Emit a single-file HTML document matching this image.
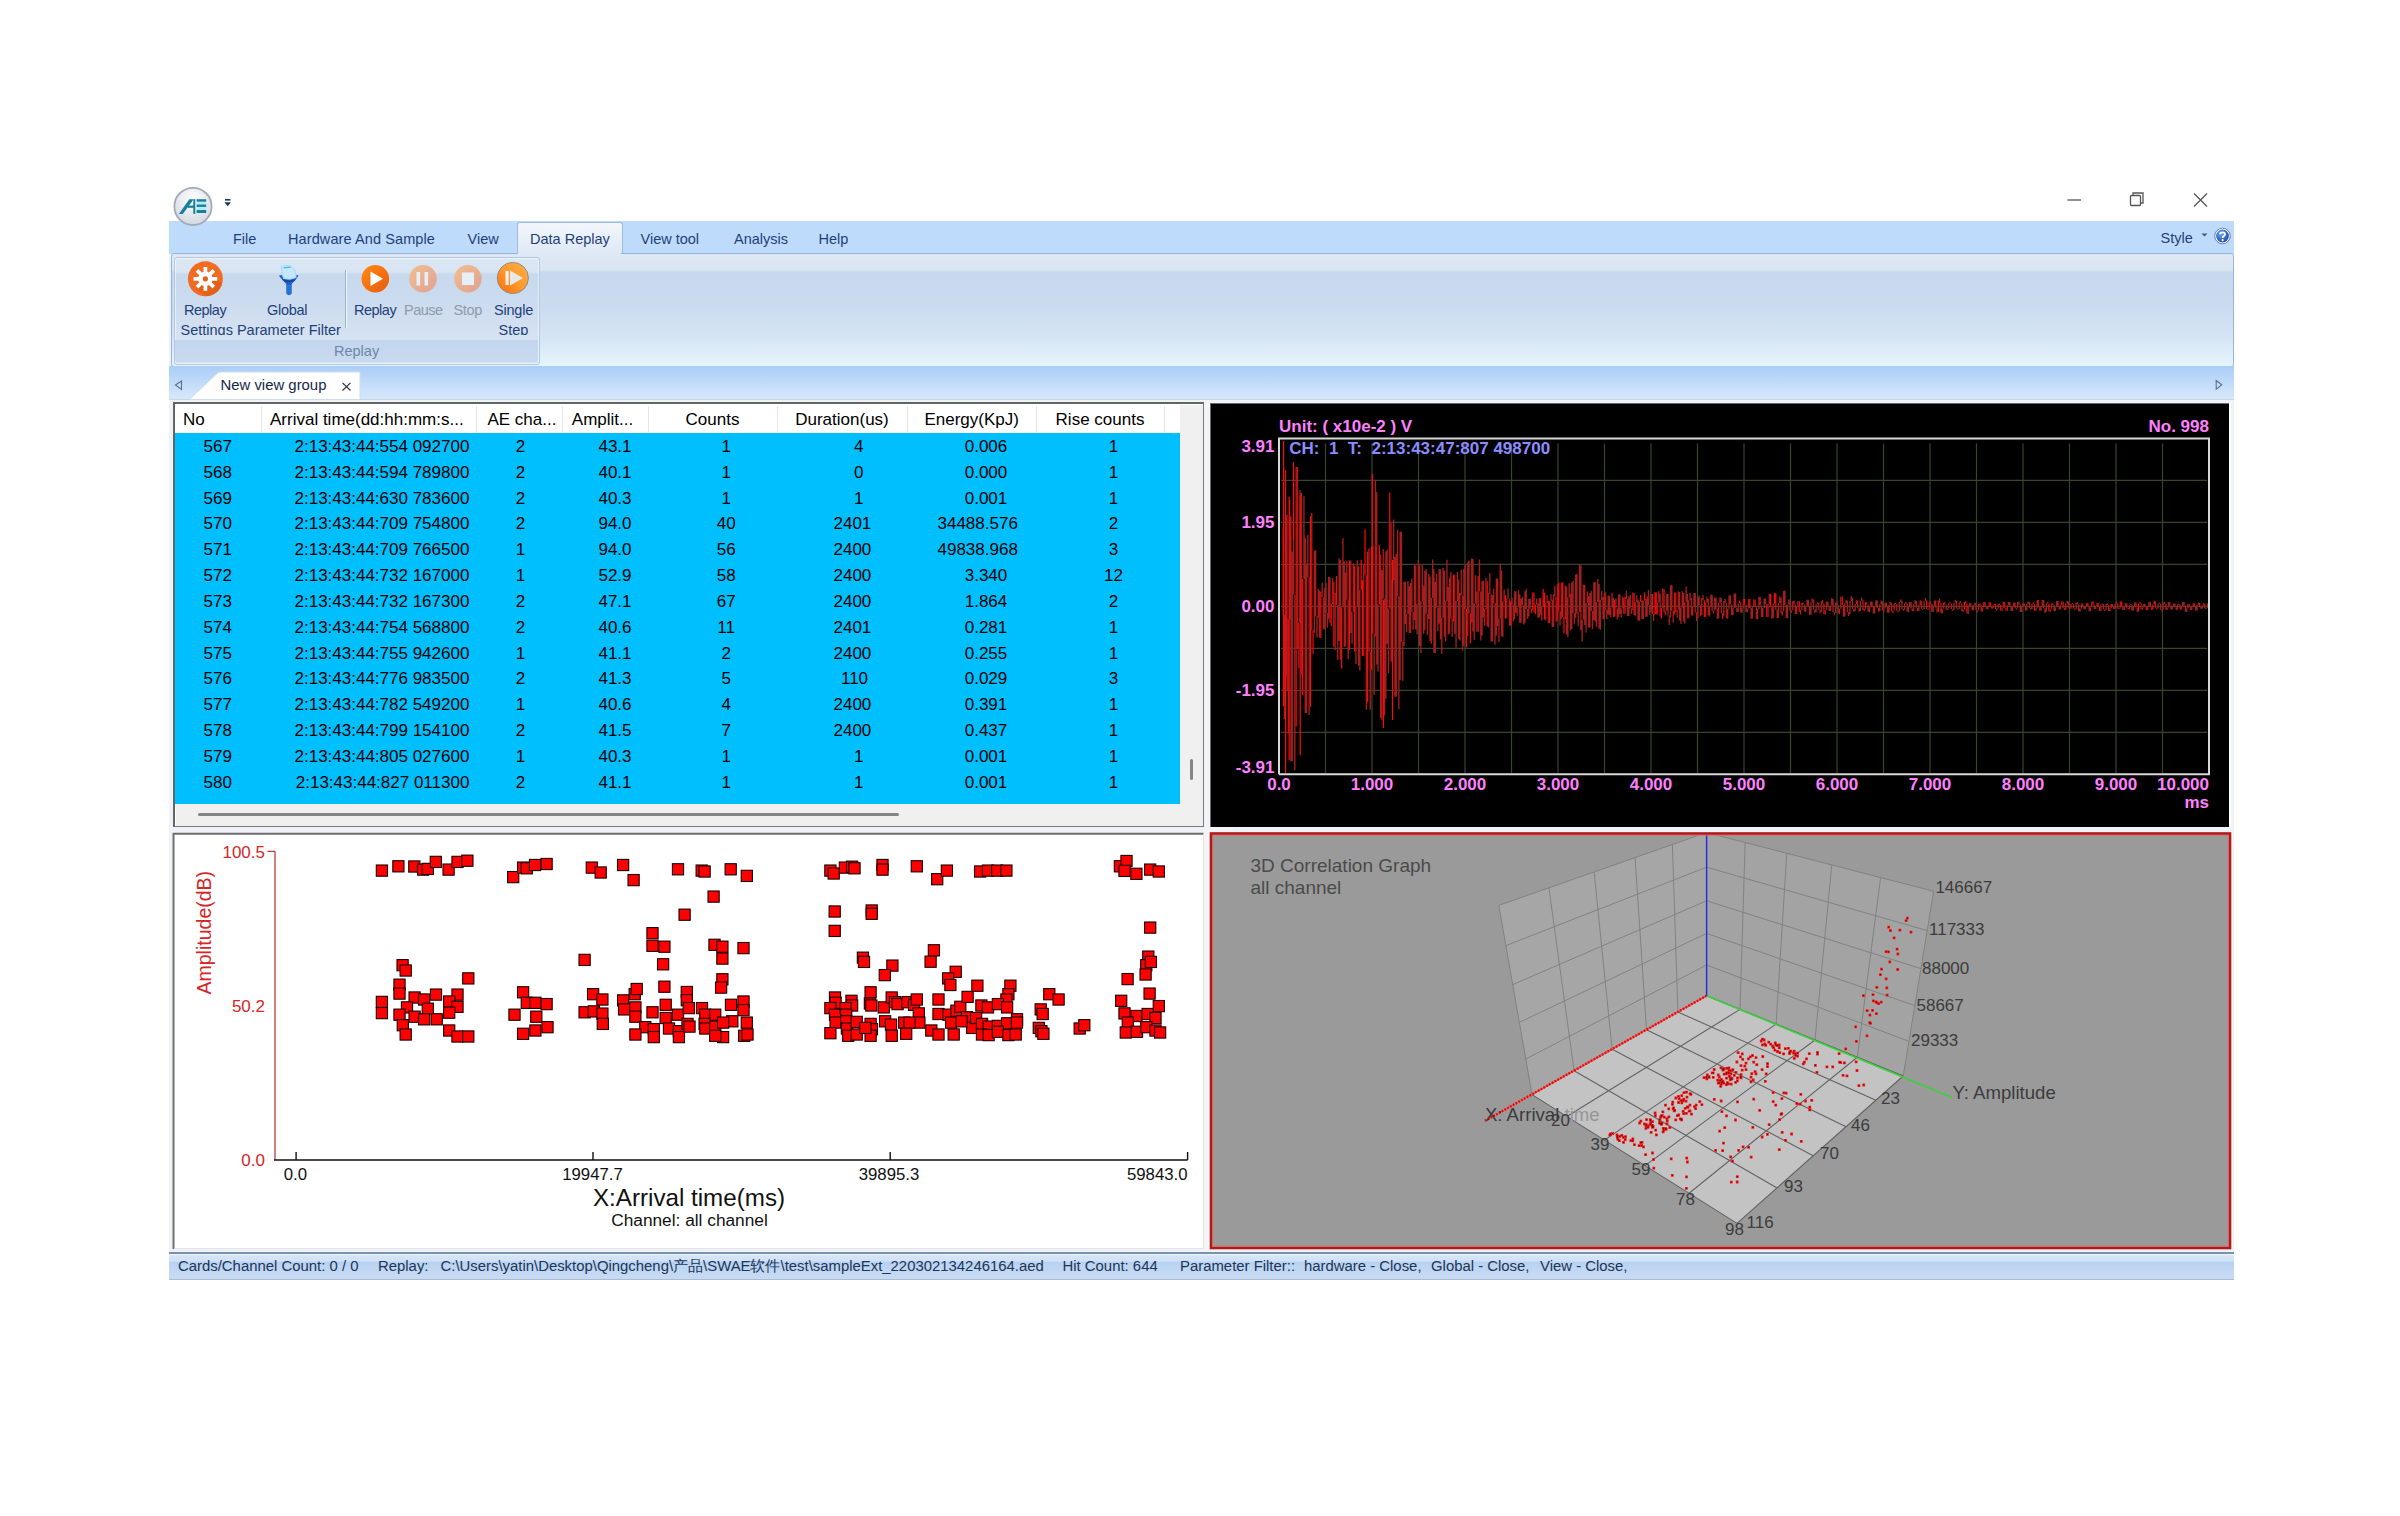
<!DOCTYPE html>
<html><head><meta charset="utf-8"><style>
html,body{margin:0;padding:0;background:#fff;}
body{width:2400px;height:1516px;position:relative;overflow:hidden;font-family:"Liberation Sans", sans-serif;}
.a{position:absolute;}
svg text{font-family:"Liberation Sans", sans-serif;}
</style></head><body>

<!-- window content background -->
<div class="a" style="left:169px;top:221px;width:2065px;height:1059px;background:#eef3f9;"></div>
<!-- menu bar -->
<div class="a" style="left:169px;top:221px;width:2065px;height:33px;background:#bfdbfb;"></div>
<!-- logo -->
<svg class="a" style="left:168px;top:182px" width="50" height="50" viewBox="0 0 50 50">
 <defs><radialGradient id="lg" cx="50%" cy="30%" r="70%"><stop offset="0" stop-color="#ffffff"/><stop offset="0.55" stop-color="#e6e9ef"/><stop offset="1" stop-color="#d3d9e2"/></radialGradient></defs>
 <circle cx="25" cy="24.4" r="18.6" fill="url(#lg)" stroke="#a3abb8" stroke-width="1.8"/>
 <path d="M10.9 31.9 L14.8 31.9 L25.7 17.2 L21.3 17.2 Z" fill="#16809a"/>
 <rect x="25.3" y="17.2" width="2" height="14.7" fill="#16809a"/>
 <rect x="20" y="23.6" width="6" height="2.2" fill="#16809a"/>
 <rect x="28.6" y="17.2" width="9.6" height="2.6" fill="#16809a"/>
 <rect x="28.6" y="19.8" width="9.6" height="2.6" fill="#aeeef8"/>
 <rect x="28.6" y="22.5" width="9.6" height="2.4" fill="#16809a"/>
 <rect x="28.6" y="25.0" width="9.6" height="2.8" fill="#aeeef8"/>
 <rect x="28.6" y="28.0" width="9.6" height="3.0" fill="#16809a"/>
</svg>
<!-- quick access arrow -->
<svg class="a" style="left:223px;top:198px" width="12" height="12" viewBox="0 0 12 12">
 <rect x="2" y="1" width="5.5" height="1.6" fill="#1a3560"/>
 <path d="M1.5 4.2 L8 4.2 L4.75 8.2 Z" fill="#1a3560"/>
</svg>
<!-- window controls -->
<svg class="a" style="left:2060px;top:185px" width="160" height="30" viewBox="0 0 160 30">
 <line x1="7.5" y1="15" x2="21" y2="15" stroke="#555" stroke-width="1.3"/>
 <rect x="70.5" y="10.5" width="10" height="10" fill="none" stroke="#555" stroke-width="1.3" rx="1"/>
 <path d="M73 10.5 V8 H83 V18 H80.5" fill="none" stroke="#555" stroke-width="1.3"/>
 <path d="M134 8.5 L147 21.5 M147 8.5 L134 21.5" stroke="#555" stroke-width="1.3"/>
</svg>
<!-- Data Replay active tab -->
<div class="a" style="left:517px;top:222px;width:104px;height:32px;background:linear-gradient(#f3f7fc,#dde8f5);border:1px solid #9fbce0;border-bottom:none;border-radius:3px 3px 0 0;"></div>
<!-- menu text -->
<div class="a" style="left:0;top:229px;font-size:14.5px;color:#1e3f7a;line-height:20px;white-space:nowrap;">
 <span class="a" style="left:233px">File</span>
 <span class="a" style="left:288px;letter-spacing:0.1px">Hardware And Sample</span>
 <span class="a" style="left:467.5px">View</span>
 <span class="a" style="left:530px">Data Replay</span>
 <span class="a" style="left:640.5px">View tool</span>
 <span class="a" style="left:734px">Analysis</span>
 <span class="a" style="left:818.5px">Help</span>
 <span class="a" style="left:2160.5px;top:-1px">Style</span>
</div>
<svg class="a" style="left:2198px;top:226px" width="34" height="20" viewBox="0 0 34 20">
 <path d="M3.5 7.5 L9.5 7.5 L6.5 10.5 Z" fill="#3a5a8a"/>
 <defs><radialGradient id="hg" cx="40%" cy="35%" r="65%"><stop offset="0" stop-color="#6fa6f0"/><stop offset="1" stop-color="#1848b0"/></radialGradient></defs>
 <circle cx="24.5" cy="10" r="7" fill="url(#hg)" stroke="#fff" stroke-width="1.2"/>
 <circle cx="24.5" cy="10" r="7.8" fill="none" stroke="#4a6fb0" stroke-width="0.8"/>
 <path d="M22 8.2 C22 5.8 27 5.8 27 8.2 C27 10 24.6 10 24.6 12" fill="none" stroke="#fff" stroke-width="1.8"/>
 <circle cx="24.6" cy="14.2" r="1.1" fill="#fff"/>
</svg>
<!-- ribbon panel -->
<div class="a" style="left:171px;top:253px;width:2061px;height:112px;border:1px solid #95b4dc;border-radius:3px;background:linear-gradient(#dfe8f5 0px,#dbe6f3 16px,#c7d9ef 18px,#cadbef 50px,#d3e3f3 80px,#e6f4fc 112px);"></div>
<div class="a" style="left:518px;top:252px;width:103px;height:3px;background:#dfe8f5;"></div>
<!-- group box -->
<div class="a" style="left:173.5px;top:256.5px;width:364px;height:106px;border:1px solid #b2c8e4;border-radius:3px;background:linear-gradient(#dce7f4 0px,#d9e5f3 14px,#c8d9ee 16px,#cddcef 50px,#d6e3f2 83px);box-shadow:inset 0 0 0 1px rgba(255,255,255,0.5);"></div>
<div class="a" style="left:175px;top:340px;width:363px;height:22px;background:linear-gradient(#c3d6ee,#c8daf0);border-radius:0 0 3px 3px;"></div>
<div class="a" style="left:173.5px;top:356px;width:366px;text-align:center;"></div>
<!-- separator -->
<div class="a" style="left:345px;top:270px;width:1px;height:58px;background:#9bb3d3;"></div>
<div class="a" style="left:346px;top:270px;width:1px;height:58px;background:#f0f6fc;"></div>
<!-- ribbon icons -->
<svg class="a" style="left:170px;top:250px" width="380" height="60" viewBox="170 250 380 60">
 <defs>
  <linearGradient id="og" x1="0" y1="0" x2="1" y2="1"><stop offset="0" stop-color="#ff8a14"/><stop offset="1" stop-color="#e85a10"/></linearGradient>
  <linearGradient id="fg" x1="0" y1="0" x2="1" y2="1"><stop offset="0" stop-color="#f0c090"/><stop offset="1" stop-color="#e0a090"/></linearGradient>
  <linearGradient id="sg" x1="0" y1="1" x2="1" y2="0"><stop offset="0" stop-color="#ff6a00"/><stop offset="0.5" stop-color="#ff9a30"/><stop offset="1" stop-color="#ffb040"/></linearGradient>
 </defs>
 <circle cx="205.4" cy="278.8" r="17.5" fill="#f26b22"/>
 <clipPath id="gc"><circle cx="205.4" cy="278.8" r="17.5"/></clipPath><path clip-path="url(#gc)" d="M210 272 L230 292 L215 305 L196 288 Z" fill="#d95a1a" opacity="0.55"/>
 <path d="M202.64 272.15 L203.54 271.85 L203.52 266.95 L207.28 266.95 L207.26 271.85 L208.16 272.15 L209.00 272.56 L212.45 269.09 L215.11 271.75 L211.64 275.20 L212.05 276.04 L212.35 276.94 L217.25 276.92 L217.25 280.68 L212.35 280.66 L212.05 281.56 L211.64 282.40 L215.11 285.85 L212.45 288.51 L209.00 285.04 L208.16 285.45 L207.26 285.75 L207.28 290.65 L203.52 290.65 L203.54 285.75 L202.64 285.45 L201.80 285.04 L198.35 288.51 L195.69 285.85 L199.16 282.40 L198.75 281.56 L198.45 280.66 L193.55 280.68 L193.55 276.92 L198.45 276.94 L198.75 276.04 L199.16 275.20 L195.69 271.75 L198.35 269.09 L201.80 272.56 Z" fill="#fff"/><circle cx="205.4" cy="278.8" r="2.6" fill="#e2601c"/>
 <!-- funnel -->
 <path d="M279 275.5 C281 279.5 285 281 286.5 285 L286.5 293.8 Q289 296.5 291.5 293.8 L291.5 285 C293 281 297 279.5 298.5 275.5 L296.3 275 C294.5 279 283.5 279 281.5 275 Z" fill="#1e62c6"/>
 <path d="M281.2 266.5 Q286 264.5 291 266 L295 270 L296.2 277.5 Q290 280.5 283.5 278.5 L282 272 Z" fill="#c6e6fb" stroke="#a6d6f4" stroke-width="0.9"/>
 <path d="M283.5 267.8 L290.5 267.2" stroke="#4fb4e8" stroke-width="1.3"/>
 <path d="M282 279.3 Q289 281.5 296 279.3 L294 281.5 Q289 283 284 281.5 Z" fill="#1846a8"/>
 <path d="M286.5 285 L291.5 285 L291.5 293.5 Q289 295.5 286.5 293.5 Z" fill="#2473d8"/>
 <circle cx="375.3" cy="278.8" r="13.8" fill="url(#og)"/>
 <path d="M370.5 271.5 L383 278.8 L370.5 286 Z" fill="#fff"/>
 <circle cx="423" cy="278.8" r="13.8" fill="url(#fg)"/>
 <rect x="416.5" y="272" width="3.6" height="13.5" fill="#e6eef8"/><rect x="424.5" y="272" width="3.6" height="13.5" fill="#e6eef8"/>
 <circle cx="467.9" cy="278.8" r="13.8" fill="url(#fg)"/>
 <rect x="462" y="272.5" width="12" height="12.5" fill="#e6eef8"/>
 <circle cx="512.8" cy="278" r="15.6" fill="url(#sg)" stroke="#8a8f98" stroke-width="1"/>
 <rect x="505.5" y="271" width="3.2" height="14" fill="#f0f0f0"/>
 <path d="M510 270.5 L523 278 L510 285.5 Z" fill="#e8e8e8"/>
</svg>
<!-- ribbon labels -->
<div class="a" style="left:0;top:301px;font-size:14.5px;color:#1e3f7a;line-height:18px;white-space:nowrap;">
 <span class="a" style="left:184px;letter-spacing:-0.5px">Replay</span>
 <span class="a" style="left:267px;letter-spacing:-0.3px">Global</span>
 <span class="a" style="left:354px;letter-spacing:-0.5px">Replay</span>
 <span class="a" style="left:404px;color:#8d9bab;letter-spacing:-0.5px">Pause</span>
 <span class="a" style="left:453.5px;color:#8d9bab;letter-spacing:-0.3px">Stop</span>
 <span class="a" style="left:494px;letter-spacing:-0.2px">Single</span>
</div>
<div class="a" style="left:170px;top:320px;width:380px;height:14.5px;overflow:hidden;font-size:14.5px;color:#1e3f7a;line-height:18px;white-space:nowrap;">
 <span class="a" style="left:10.5px;top:1px">Settings Parameter Filter</span>
 <span class="a" style="left:328.5px;top:1px">Step</span>
</div>
<div class="a" style="left:334px;top:342px;font-size:14.5px;color:#6e87a8;line-height:18px;white-space:nowrap;">Replay</div>
<!-- tab strip -->
<div class="a" style="left:169px;top:366px;width:2065px;height:34px;background:linear-gradient(#aacdf8,#c6def9 60%,#d9e8fb);"></div>
<div class="a" style="left:169px;top:399px;width:2065px;height:1px;background:#c8d6e6;"></div>
<svg class="a" style="left:169px;top:366px" width="2065" height="34" viewBox="169 366 2065 34">
 <path d="M189.5 399.5 L216 374.5 Q217.5 372 221 372 L360 372 L360 399.5 Z" fill="#fff" stroke="#cfdcea" stroke-width="1"/>
 <path d="M175.5 385 L181.5 381 L181.5 389.5 Z" fill="none" stroke="#5a7090" stroke-width="1.1"/>
 <path d="M2216.2 380.5 L2221.8 384.8 L2216.2 389.2 Z" fill="none" stroke="#5a7090" stroke-width="1.1"/>
 <path d="M342.5 382.8 L350.5 390.5 M350.5 382.8 L342.5 390.5" stroke="#2a2a3a" stroke-width="1.1"/>
</svg>
<div class="a" style="left:220.5px;top:376px;font-size:14.9px;color:#15284a;line-height:18px;white-space:nowrap;">New view group</div>
<!-- status bar -->
<div class="a" style="left:169px;top:1252px;width:2065px;height:2px;background:#7e91ab;"></div>
<div class="a" style="left:169px;top:1254px;width:2065px;height:26px;background:linear-gradient(#eef8fd 0px,#d5e5f8 2px,#d0e1f7 7px,#b6d1f2 8.5px,#bcd5f2 12px,#c8dbf4 25px);border-bottom:1px solid #a9bcd4;box-sizing:border-box;"></div>
<div class="a" style="left:178px;top:1257px;font-size:14.9px;color:#1d3556;line-height:18px;white-space:nowrap;word-spacing:0px">
 <span class="a" style="left:0">Cards/Channel Count: 0 / 0</span>
 <span class="a" style="left:200px">Replay:</span>
 <span class="a" style="left:262.5px">C:\Users\yatin\Desktop\Qingcheng\产品\SWAE软件\test\sampleExt_220302134246164.aed</span>
 <span class="a" style="left:884.5px">Hit Count: 644</span>
 <span class="a" style="left:1002px">Parameter Filter::</span>
 <span class="a" style="left:1126px">hardware - Close,</span>
 <span class="a" style="left:1253px">Global - Close,</span>
 <span class="a" style="left:1362px">View - Close,</span>
</div>

<div class="a" style="left:172.5px;top:402px;width:1031.5px;height:425px;background:#f0f0f0;box-sizing:border-box;border-top:2px solid #646464;border-left:2px solid #646464;border-right:1px solid #7a7a7a;border-bottom:1px solid #7a7a7a;"></div>
<div class="a" style="left:174.5px;top:404px;width:1028px;height:1px;background:#fff;"></div>
<div class="a" style="left:174.5px;top:404px;width:1px;height:422px;background:#fff;"></div>
<div class="a" style="left:175px;top:405px;width:1005px;height:28px;background:#fff;"></div>
<div class="a" style="left:260.6px;top:406px;width:1px;height:26px;background:#e6e6e6;"></div>
<div class="a" style="left:476.1px;top:406px;width:1px;height:26px;background:#e6e6e6;"></div>
<div class="a" style="left:562.1px;top:406px;width:1px;height:26px;background:#e6e6e6;"></div>
<div class="a" style="left:648.4px;top:406px;width:1px;height:26px;background:#e6e6e6;"></div>
<div class="a" style="left:777.3px;top:406px;width:1px;height:26px;background:#e6e6e6;"></div>
<div class="a" style="left:906.6px;top:406px;width:1px;height:26px;background:#e6e6e6;"></div>
<div class="a" style="left:1035.6px;top:406px;width:1px;height:26px;background:#e6e6e6;"></div>
<div class="a" style="left:1164.4px;top:406px;width:1px;height:26px;background:#e6e6e6;"></div>
<div class="a" style="left:175px;top:433px;width:1005px;height:371px;background:#00bfff;"></div>
<div class="a" style="left:0;top:409.5px;font-size:17px;color:#000;line-height:20px;white-space:nowrap;">
 <span class="a" style="left:183px">No</span>
 <span class="a" style="left:270px">Arrival time(dd:hh:mm:s...</span>
 <span class="a" style="left:487.4px">AE cha...</span>
 <span class="a" style="left:571.8px">Amplit...</span>
 <span class="a" style="left:612.5px;width:200px;text-align:center">Counts</span>
 <span class="a" style="left:742px;width:200px;text-align:center">Duration(us)</span>
 <span class="a" style="left:871.7px;width:200px;text-align:center">Energy(KpJ)</span>
 <span class="a" style="left:1000px;width:200px;text-align:center">Rise counts</span>
</div>
<div class="a" style="left:0;top:0;font-size:17px;color:#000;line-height:20px;white-space:nowrap;">
<span class="a" style="top:436.8px;left:167.8px;width:100px;text-align:center">567</span>
<span class="a" style="top:436.8px;left:219.39999999999998px;width:250px;text-align:right">2:13:43:44:554 092700</span>
<span class="a" style="top:436.8px;left:470.5px;width:100px;text-align:center">2</span>
<span class="a" style="top:436.8px;left:565px;width:100px;text-align:center">43.1</span>
<span class="a" style="top:436.8px;left:676.2px;width:100px;text-align:center">1</span>
<span class="a" style="top:436.8px;left:808.7px;width:100px;text-align:center">4</span>
<span class="a" style="top:436.8px;left:916.0px;width:140px;text-align:center">0.006</span>
<span class="a" style="top:436.8px;left:1063.5px;width:100px;text-align:center">1</span>
<span class="a" style="top:462.7px;left:167.8px;width:100px;text-align:center">568</span>
<span class="a" style="top:462.7px;left:219.39999999999998px;width:250px;text-align:right">2:13:43:44:594 789800</span>
<span class="a" style="top:462.7px;left:470.5px;width:100px;text-align:center">2</span>
<span class="a" style="top:462.7px;left:565px;width:100px;text-align:center">40.1</span>
<span class="a" style="top:462.7px;left:676.2px;width:100px;text-align:center">1</span>
<span class="a" style="top:462.7px;left:808.7px;width:100px;text-align:center">0</span>
<span class="a" style="top:462.7px;left:916.0px;width:140px;text-align:center">0.000</span>
<span class="a" style="top:462.7px;left:1063.5px;width:100px;text-align:center">1</span>
<span class="a" style="top:488.5px;left:167.8px;width:100px;text-align:center">569</span>
<span class="a" style="top:488.5px;left:219.39999999999998px;width:250px;text-align:right">2:13:43:44:630 783600</span>
<span class="a" style="top:488.5px;left:470.5px;width:100px;text-align:center">2</span>
<span class="a" style="top:488.5px;left:565px;width:100px;text-align:center">40.3</span>
<span class="a" style="top:488.5px;left:676.2px;width:100px;text-align:center">1</span>
<span class="a" style="top:488.5px;left:808.7px;width:100px;text-align:center">1</span>
<span class="a" style="top:488.5px;left:916.0px;width:140px;text-align:center">0.001</span>
<span class="a" style="top:488.5px;left:1063.5px;width:100px;text-align:center">1</span>
<span class="a" style="top:514.3px;left:167.8px;width:100px;text-align:center">570</span>
<span class="a" style="top:514.3px;left:219.39999999999998px;width:250px;text-align:right">2:13:43:44:709 754800</span>
<span class="a" style="top:514.3px;left:470.5px;width:100px;text-align:center">2</span>
<span class="a" style="top:514.3px;left:565px;width:100px;text-align:center">94.0</span>
<span class="a" style="top:514.3px;left:676.2px;width:100px;text-align:center">40</span>
<span class="a" style="top:514.3px;left:802.4px;width:100px;text-align:center">2401</span>
<span class="a" style="top:514.3px;left:907.7px;width:140px;text-align:center">34488.576</span>
<span class="a" style="top:514.3px;left:1063.5px;width:100px;text-align:center">2</span>
<span class="a" style="top:540.2px;left:167.8px;width:100px;text-align:center">571</span>
<span class="a" style="top:540.2px;left:219.39999999999998px;width:250px;text-align:right">2:13:43:44:709 766500</span>
<span class="a" style="top:540.2px;left:470.5px;width:100px;text-align:center">1</span>
<span class="a" style="top:540.2px;left:565px;width:100px;text-align:center">94.0</span>
<span class="a" style="top:540.2px;left:676.2px;width:100px;text-align:center">56</span>
<span class="a" style="top:540.2px;left:802.4px;width:100px;text-align:center">2400</span>
<span class="a" style="top:540.2px;left:907.7px;width:140px;text-align:center">49838.968</span>
<span class="a" style="top:540.2px;left:1063.5px;width:100px;text-align:center">3</span>
<span class="a" style="top:566.0px;left:167.8px;width:100px;text-align:center">572</span>
<span class="a" style="top:566.0px;left:219.39999999999998px;width:250px;text-align:right">2:13:43:44:732 167000</span>
<span class="a" style="top:566.0px;left:470.5px;width:100px;text-align:center">1</span>
<span class="a" style="top:566.0px;left:565px;width:100px;text-align:center">52.9</span>
<span class="a" style="top:566.0px;left:676.2px;width:100px;text-align:center">58</span>
<span class="a" style="top:566.0px;left:802.4px;width:100px;text-align:center">2400</span>
<span class="a" style="top:566.0px;left:916.0px;width:140px;text-align:center">3.340</span>
<span class="a" style="top:566.0px;left:1063.5px;width:100px;text-align:center">12</span>
<span class="a" style="top:591.9px;left:167.8px;width:100px;text-align:center">573</span>
<span class="a" style="top:591.9px;left:219.39999999999998px;width:250px;text-align:right">2:13:43:44:732 167300</span>
<span class="a" style="top:591.9px;left:470.5px;width:100px;text-align:center">2</span>
<span class="a" style="top:591.9px;left:565px;width:100px;text-align:center">47.1</span>
<span class="a" style="top:591.9px;left:676.2px;width:100px;text-align:center">67</span>
<span class="a" style="top:591.9px;left:802.4px;width:100px;text-align:center">2400</span>
<span class="a" style="top:591.9px;left:916.0px;width:140px;text-align:center">1.864</span>
<span class="a" style="top:591.9px;left:1063.5px;width:100px;text-align:center">2</span>
<span class="a" style="top:617.8px;left:167.8px;width:100px;text-align:center">574</span>
<span class="a" style="top:617.8px;left:219.39999999999998px;width:250px;text-align:right">2:13:43:44:754 568800</span>
<span class="a" style="top:617.8px;left:470.5px;width:100px;text-align:center">2</span>
<span class="a" style="top:617.8px;left:565px;width:100px;text-align:center">40.6</span>
<span class="a" style="top:617.8px;left:676.2px;width:100px;text-align:center">11</span>
<span class="a" style="top:617.8px;left:802.4px;width:100px;text-align:center">2401</span>
<span class="a" style="top:617.8px;left:916.0px;width:140px;text-align:center">0.281</span>
<span class="a" style="top:617.8px;left:1063.5px;width:100px;text-align:center">1</span>
<span class="a" style="top:643.6px;left:167.8px;width:100px;text-align:center">575</span>
<span class="a" style="top:643.6px;left:219.39999999999998px;width:250px;text-align:right">2:13:43:44:755 942600</span>
<span class="a" style="top:643.6px;left:470.5px;width:100px;text-align:center">1</span>
<span class="a" style="top:643.6px;left:565px;width:100px;text-align:center">41.1</span>
<span class="a" style="top:643.6px;left:676.2px;width:100px;text-align:center">2</span>
<span class="a" style="top:643.6px;left:802.4px;width:100px;text-align:center">2400</span>
<span class="a" style="top:643.6px;left:916.0px;width:140px;text-align:center">0.255</span>
<span class="a" style="top:643.6px;left:1063.5px;width:100px;text-align:center">1</span>
<span class="a" style="top:669.4px;left:167.8px;width:100px;text-align:center">576</span>
<span class="a" style="top:669.4px;left:219.39999999999998px;width:250px;text-align:right">2:13:43:44:776 983500</span>
<span class="a" style="top:669.4px;left:470.5px;width:100px;text-align:center">2</span>
<span class="a" style="top:669.4px;left:565px;width:100px;text-align:center">41.3</span>
<span class="a" style="top:669.4px;left:676.2px;width:100px;text-align:center">5</span>
<span class="a" style="top:669.4px;left:804.5px;width:100px;text-align:center">110</span>
<span class="a" style="top:669.4px;left:916.0px;width:140px;text-align:center">0.029</span>
<span class="a" style="top:669.4px;left:1063.5px;width:100px;text-align:center">3</span>
<span class="a" style="top:695.3px;left:167.8px;width:100px;text-align:center">577</span>
<span class="a" style="top:695.3px;left:219.39999999999998px;width:250px;text-align:right">2:13:43:44:782 549200</span>
<span class="a" style="top:695.3px;left:470.5px;width:100px;text-align:center">1</span>
<span class="a" style="top:695.3px;left:565px;width:100px;text-align:center">40.6</span>
<span class="a" style="top:695.3px;left:676.2px;width:100px;text-align:center">4</span>
<span class="a" style="top:695.3px;left:802.4px;width:100px;text-align:center">2400</span>
<span class="a" style="top:695.3px;left:916.0px;width:140px;text-align:center">0.391</span>
<span class="a" style="top:695.3px;left:1063.5px;width:100px;text-align:center">1</span>
<span class="a" style="top:721.1px;left:167.8px;width:100px;text-align:center">578</span>
<span class="a" style="top:721.1px;left:219.39999999999998px;width:250px;text-align:right">2:13:43:44:799 154100</span>
<span class="a" style="top:721.1px;left:470.5px;width:100px;text-align:center">2</span>
<span class="a" style="top:721.1px;left:565px;width:100px;text-align:center">41.5</span>
<span class="a" style="top:721.1px;left:676.2px;width:100px;text-align:center">7</span>
<span class="a" style="top:721.1px;left:802.4px;width:100px;text-align:center">2400</span>
<span class="a" style="top:721.1px;left:916.0px;width:140px;text-align:center">0.437</span>
<span class="a" style="top:721.1px;left:1063.5px;width:100px;text-align:center">1</span>
<span class="a" style="top:747.0px;left:167.8px;width:100px;text-align:center">579</span>
<span class="a" style="top:747.0px;left:219.39999999999998px;width:250px;text-align:right">2:13:43:44:805 027600</span>
<span class="a" style="top:747.0px;left:470.5px;width:100px;text-align:center">1</span>
<span class="a" style="top:747.0px;left:565px;width:100px;text-align:center">40.3</span>
<span class="a" style="top:747.0px;left:676.2px;width:100px;text-align:center">1</span>
<span class="a" style="top:747.0px;left:808.7px;width:100px;text-align:center">1</span>
<span class="a" style="top:747.0px;left:916.0px;width:140px;text-align:center">0.001</span>
<span class="a" style="top:747.0px;left:1063.5px;width:100px;text-align:center">1</span>
<span class="a" style="top:772.8px;left:167.8px;width:100px;text-align:center">580</span>
<span class="a" style="top:772.8px;left:219.39999999999998px;width:250px;text-align:right">2:13:43:44:827 011300</span>
<span class="a" style="top:772.8px;left:470.5px;width:100px;text-align:center">2</span>
<span class="a" style="top:772.8px;left:565px;width:100px;text-align:center">41.1</span>
<span class="a" style="top:772.8px;left:676.2px;width:100px;text-align:center">1</span>
<span class="a" style="top:772.8px;left:808.7px;width:100px;text-align:center">1</span>
<span class="a" style="top:772.8px;left:916.0px;width:140px;text-align:center">0.001</span>
<span class="a" style="top:772.8px;left:1063.5px;width:100px;text-align:center">1</span>
</div>
<div class="a" style="left:198px;top:813px;width:701px;height:3px;background:#858585;border-radius:1.5px;"></div>
<div class="a" style="left:1189.5px;top:759px;width:3px;height:21px;background:#858585;border-radius:1.5px;"></div>
<div class="a" style="left:1204px;top:400px;width:30px;height:852px;background:#f3f4f6;"></div>
<div class="a" style="left:1210px;top:402.5px;width:1019px;height:424.5px;background:#000;box-sizing:border-box;border-top:1.5px solid #6a6a6a;border-left:1.5px solid #6a6a6a;"></div>
<div class="a" style="left:2229px;top:402.5px;width:2px;height:425px;background:#fff;"></div>
<svg class="a" style="left:1210px;top:402px" width="1020" height="426" viewBox="1210 402 1020 426">
<path d="M1325.5 443.4V773.3M1372.0 443.4V773.3M1418.5 443.4V773.3M1465.0 443.4V773.3M1511.5 443.4V773.3M1558.0 443.4V773.3M1604.5 443.4V773.3M1651.0 443.4V773.3M1697.5 443.4V773.3M1744.0 443.4V773.3M1790.5 443.4V773.3M1837.0 443.4V773.3M1883.5 443.4V773.3M1930.0 443.4V773.3M1976.5 443.4V773.3M2023.0 443.4V773.3M2069.5 443.4V773.3M2116.0 443.4V773.3M2162.5 443.4V773.3M1281.0 480.4H2207.0M1281.0 522.4H2207.0M1281.0 564.4H2207.0M1281.0 606.3H2207.0M1281.0 648.3H2207.0M1281.0 690.3H2207.0M1281.0 732.3H2207.0" stroke="#37452f" stroke-width="1.2" fill="none"/>
<path d="M1283.15 527.0V615.0M1284.45 615.0V718.9M1285.75 514.8V675.5M1287.05 514.8V690.9M1288.35 619.2V733.4M1289.65 500.0V619.2M1290.95 516.6V761.2M1292.25 551.8V761.2M1293.55 524.8V594.8M1294.85 594.8V769.9M1297.45 467.0V647.9M1298.75 623.1V667.9M1300.05 490.0V623.1M1301.35 492.8V674.5M1303.95 496.2V579.0M1305.25 537.8V713.0M1306.55 563.5V713.0M1307.85 534.7V577.3M1309.15 577.3V715.1M1311.75 513.1V630.2M1314.35 550.8V633.1M1315.65 550.2V616.2M1316.95 616.2V637.5M1318.25 588.9V617.5M1319.55 590.5V637.7M1322.15 582.4V597.2M1323.45 597.2V629.3M1324.75 587.7V628.9M1326.05 583.2V613.1M1327.35 613.1V627.6M1328.65 576.7V618.8M1329.95 577.2V623.0M1332.55 578.0V603.9M1335.15 592.7V650.3M1337.75 604.9V659.9M1339.05 558.3V640.9M1340.35 560.0V659.6M1342.95 538.2V607.3M1344.25 561.5V646.7M1345.55 572.4V646.7M1346.85 560.7V599.8M1348.15 599.8V659.3M1350.75 560.5V633.1M1352.05 611.8V643.7M1353.35 563.4V611.8M1355.95 606.7V664.0M1357.25 560.1V606.7M1358.55 566.2V665.8M1359.85 589.7V670.5M1363.75 564.3V656.0M1366.35 575.6V709.8M1368.95 548.6V651.7M1370.25 651.7V709.7M1374.15 633.2V694.9M1375.45 479.7V636.6M1376.75 492.2V664.6M1378.05 604.4V671.5M1380.65 554.4V718.0M1381.95 569.9V720.6M1383.25 549.0V598.6M1384.55 598.6V715.3M1385.85 551.2V698.7M1387.15 549.4V643.7M1388.45 608.5V673.0M1391.05 523.2V661.6M1392.35 580.2V662.8M1393.65 519.5V580.2M1394.95 556.9V696.8M1396.25 553.7V696.8M1397.55 529.9V596.3M1398.85 596.3V709.2M1400.15 531.8V680.0M1401.45 531.8V642.0M1402.75 642.0V680.9M1404.05 581.8V645.8M1405.35 581.8V624.0M1406.65 613.9V632.2M1407.95 581.1V613.9M1409.25 586.3V633.1M1410.55 583.0V633.1M1411.85 578.5V611.9M1413.15 611.9V629.7M1414.45 565.1V620.3M1415.75 565.6V629.6M1417.05 604.2V634.3M1418.35 560.1V604.2M1419.65 565.2V645.9M1420.95 601.6V653.1M1422.25 564.9V601.6M1423.55 585.5V633.5M1424.85 570.7V630.3M1426.15 568.9V613.7M1427.45 613.7V635.1M1428.75 573.9V619.1M1430.05 576.6V640.9M1431.35 598.1V643.8M1432.65 559.4V598.1M1433.95 569.2V653.0M1435.25 581.9V653.0M1436.55 573.8V607.7M1437.85 607.7V631.3M1439.15 569.3V623.7M1440.45 569.3V639.4M1441.75 617.8V654.1M1443.05 568.0V617.8M1444.35 570.8V636.8M1445.65 601.3V641.6M1446.95 559.7V601.3M1448.25 587.1V634.4M1449.55 577.6V633.6M1450.85 572.1V618.2M1452.15 618.2V637.1M1454.75 574.8V633.6M1456.05 601.1V647.8M1457.35 571.9V601.1M1458.65 579.5V638.9M1459.95 593.0V640.4M1461.25 569.7V595.5M1462.55 595.5V650.4M1463.85 568.7V645.7M1465.15 564.4V608.9M1467.75 562.2V636.1M1469.05 560.4V613.5M1471.65 558.5V622.5M1472.95 559.1V631.4M1474.25 603.5V639.8M1475.55 575.3V603.5M1476.85 591.6V631.8M1479.45 559.5V591.6M1480.75 591.6V640.5M1482.05 581.1V635.4M1483.35 580.8V617.4M1484.65 609.1V625.6M1485.95 577.8V609.1M1488.55 593.1V627.5M1489.85 573.1V594.0M1491.15 594.0V641.5M1492.45 594.9V641.3M1493.75 588.4V603.6M1495.05 603.6V644.8M1496.35 578.5V635.4M1497.65 578.5V626.2M1498.95 618.6V642.1M1500.25 563.6V618.6M1501.55 570.6V635.9M1502.85 601.2V636.9M1504.15 589.7V601.2M1506.75 598.2V618.5M1508.05 588.4V598.4M1509.35 598.4V625.8M1511.95 597.5V604.7M1513.25 604.7V621.5M1514.55 591.3V619.2M1515.85 591.3V612.8M1517.15 607.5V615.8M1518.45 590.3V607.5M1519.75 594.3V622.8M1521.05 598.6V622.8M1522.35 596.8V605.2M1523.65 605.2V624.4M1524.95 591.2V623.1M1526.25 588.7V608.9M1527.55 608.9V619.0M1528.85 599.1V616.5M1530.15 598.7V608.6M1531.45 608.6V613.2M1534.05 592.4V612.4M1536.65 598.6V604.7M1537.95 603.6V617.9M1539.25 598.3V617.2M1540.55 597.7V614.8M1541.85 606.0V620.5M1545.75 603.1V620.3M1547.05 595.2V603.1M1548.35 600.8V623.1M1550.95 594.2V600.7M1552.25 599.8V627.0M1553.55 594.2V627.0M1554.85 585.7V596.4M1557.45 584.3V620.8M1560.05 611.4V625.6M1561.35 582.5V618.7M1565.25 585.4V619.5M1566.55 586.4V634.6M1567.85 597.6V637.0M1569.15 583.2V597.6M1570.45 594.1V630.6M1571.75 582.6V629.2M1573.05 581.1V612.9M1574.35 612.9V623.7M1575.65 574.7V617.9M1576.95 573.9V613.2M1578.25 612.2V625.7M1579.55 564.2V612.2M1580.85 565.5V630.0M1582.15 619.7V641.5M1583.45 584.8V619.7M1584.75 584.8V624.9M1586.05 603.1V632.5M1587.35 591.4V603.1M1588.65 596.3V627.5M1589.95 593.0V627.5M1591.25 590.7V611.0M1592.55 611.0V628.9M1593.85 582.3V619.9M1595.15 582.3V621.4M1596.45 602.1V626.8M1597.75 579.1V602.1M1599.05 583.9V628.6M1600.35 600.1V629.8M1601.65 591.1V600.1M1602.95 597.1V619.2M1604.25 593.7V619.0M1605.55 592.2V609.8M1606.85 609.8V619.3M1608.15 595.5V614.6M1609.45 595.7V615.3M1610.75 607.6V617.1M1612.05 592.8V607.6M1613.35 597.9V616.9M1615.95 598.5V608.4M1617.25 608.4V619.6M1618.55 594.4V617.3M1619.85 594.2V613.9M1621.15 608.2V617.7M1622.45 596.7V608.2M1623.75 598.0V613.8M1626.35 590.7V599.3M1627.65 599.3V616.2M1628.95 596.5V615.9M1630.25 595.1V608.3M1631.55 608.3V614.0M1634.15 593.1V614.9M1635.45 602.3V616.1M1636.75 595.6V602.3M1638.05 599.7V620.7M1639.35 601.8V620.7M1641.95 600.1V619.0M1643.25 600.4V619.0M1645.85 599.0V616.8M1647.15 596.4V616.8M1648.45 590.1V604.9M1649.75 604.9V614.7M1651.05 593.9V611.6M1653.65 614.0V621.0M1657.55 602.4V615.0M1658.85 591.0V602.4M1660.15 593.8V616.8M1662.75 588.5V608.0M1665.35 610.7V615.6M1666.65 594.1V610.7M1667.95 594.1V615.5M1669.25 615.5V625.0M1670.55 585.2V617.3M1671.85 584.8V610.8M1673.15 610.8V622.4M1674.45 592.6V614.4M1677.05 609.7V617.7M1678.35 591.2V609.7M1679.65 591.9V620.4M1680.95 607.7V624.0M1682.25 591.3V607.7M1683.55 592.9V621.6M1684.85 602.2V623.6M1686.15 586.4V602.2M1687.45 594.0V618.3M1688.75 600.3V618.3M1690.05 593.1V600.3M1691.35 598.1V615.3M1692.65 606.9V615.8M1693.95 593.0V606.9M1695.25 593.2V612.3M1696.55 612.3V620.9M1697.85 597.2V617.9M1699.15 595.5V605.0M1700.45 605.0V616.4M1701.75 598.0V615.2M1703.05 595.3V600.2M1705.65 602.4V617.0M1706.95 596.5V602.4M1708.25 599.0V615.3M1709.55 607.0V616.4M1710.85 594.6V607.0M1712.15 595.2V611.0M1713.45 610.6V613.6M1714.75 597.7V610.6M1716.05 597.5V609.2M1717.35 609.2V618.9M1718.65 602.6V618.3M1719.95 597.2V602.6M1721.25 598.2V613.1M1722.55 613.1V619.0M1723.85 601.1V616.6M1725.15 598.9V602.9M1726.45 602.9V618.2M1727.75 608.7V618.8M1729.05 595.5V608.7M1730.35 595.3V604.4M1731.65 604.4V615.1M1732.95 607.8V615.3M1734.25 593.6V607.8M1735.55 593.6V607.8M1736.85 607.8V612.3M1738.15 603.4V611.9M1740.75 602.2V612.2M1742.05 607.8V613.0M1743.35 599.1V607.8M1745.95 604.8V612.0M1747.25 608.4V612.3M1748.55 599.1V608.4M1751.15 608.0V618.8M1752.45 606.3V618.8M1753.75 599.6V606.3M1756.35 606.2V619.2M1757.65 609.1V619.3M1758.95 596.9V609.1M1760.25 596.8V605.6M1761.55 605.6V617.1M1762.85 608.1V617.1M1764.15 598.7V608.1M1765.45 598.5V604.2M1768.05 604.3V617.1M1769.35 593.7V604.3M1771.95 607.4V618.4M1773.25 603.5V618.3M1777.15 609.7V618.3M1778.45 602.9V617.9M1779.75 596.2V602.9M1781.05 597.6V612.9M1782.35 611.2V615.7M1783.65 591.1V611.2M1784.95 590.4V605.1M1786.25 605.1V618.3M1787.55 604.6V618.3M1788.85 599.2V604.6M1790.15 600.5V611.1M1791.45 610.2V612.7M1792.75 601.3V610.2M1794.05 600.6V604.8M1795.35 604.8V614.0M1796.65 606.2V614.0M1797.95 601.0V606.2M1800.55 610.1V614.5M1801.85 602.7V610.1M1803.15 602.4V604.6M1804.45 604.6V611.7M1805.75 605.9V611.8M1807.05 599.8V605.9M1808.35 599.8V605.9M1809.65 605.9V614.9M1810.95 602.4V614.5M1812.25 598.6V602.4M1813.55 599.4V609.4M1814.85 609.4V613.1M1816.15 604.2V612.2M1817.45 602.2V604.2M1818.75 602.7V610.0M1820.05 610.0V613.4M1821.35 601.1V611.5M1822.65 599.9V603.6M1825.25 610.1V614.7M1826.55 601.8V610.1M1827.85 601.6V606.8M1829.15 606.8V611.1M1830.45 605.4V611.1M1831.75 598.1V605.4M1833.05 599.1V612.3M1834.35 612.3V615.2M1835.65 602.4V612.7M1836.95 601.5V605.1M1838.25 605.1V613.6M1839.55 608.8V613.9M1840.85 596.8V608.8M1843.45 605.1V616.7M1844.75 603.6V616.6M1846.05 599.7V603.6M1847.35 600.7V611.9M1848.65 611.9V615.9M1849.95 601.0V614.3M1851.25 596.2V601.0M1852.55 597.8V609.1M1853.85 609.1V611.6M1855.15 604.1V611.0M1856.45 600.3V604.1M1857.75 600.6V608.2M1859.05 608.2V611.7M1860.35 600.5V610.9M1861.65 597.4V600.5M1862.95 599.7V610.1M1864.25 608.7V611.3M1866.85 601.9V604.4M1868.15 604.4V611.7M1869.45 607.0V612.0M1870.75 601.6V607.0M1872.05 601.6V606.5M1873.35 606.5V613.6M1874.65 606.7V613.6M1875.95 600.3V606.7M1877.25 600.4V608.1M1878.55 608.1V611.5M1879.85 604.3V611.2M1881.15 600.5V604.3M1882.45 601.3V610.5M1883.75 608.6V612.1M1885.05 602.7V608.6M1886.35 602.6V605.9M1887.65 605.9V612.7M1888.95 604.7V612.7M1890.25 602.0V604.7M1891.55 602.8V611.2M1892.85 610.6V613.2M1896.75 604.1V610.8M1898.05 610.8V612.6M1899.35 602.1V611.1M1900.65 599.4V602.1M1901.95 600.7V609.0M1903.25 609.0V610.8M1904.55 603.2V609.7M1905.85 602.0V603.6M1907.15 603.6V611.6M1908.45 606.8V612.2M1909.75 602.0V606.8M1911.05 602.1V608.4M1912.35 608.4V611.3M1913.65 604.3V611.0M1914.95 600.5V604.3M1916.25 600.8V607.7M1917.55 607.7V611.2M1918.85 605.0V611.1M1921.45 601.2V608.5M1922.75 608.5V609.7M1924.05 601.3V609.0M1925.35 598.0V601.3M1927.95 608.8V609.9M1929.25 602.3V608.8M1930.55 601.1V604.0M1933.15 606.2V612.0M1934.45 600.5V606.2M1935.75 600.5V607.5M1937.05 607.5V612.6M1939.65 598.5V603.3M1940.95 603.3V613.0M1942.25 608.8V613.4M1943.55 602.5V608.8M1946.15 604.4V609.5M1948.75 603.3V608.6M1951.35 603.4V609.2M1952.65 609.2V610.8M1953.95 602.7V610.0M1955.25 599.8V602.7M1956.55 601.0V608.4M1957.85 608.4V609.8M1959.15 602.4V609.1M1960.45 600.9V603.4M1961.75 603.4V610.9M1963.05 609.5V611.7M1965.65 601.1V603.8M1968.25 606.6V613.9M1969.55 603.3V606.6M1970.85 603.3V605.7M1972.15 605.7V610.2M1973.45 605.3V610.2M1974.75 602.7V605.3M1976.05 603.2V610.2M1977.35 610.2V612.3M1978.65 604.0V610.4M1979.95 603.6V605.6M1981.25 605.6V611.4M1982.55 607.6V611.5M1985.15 601.9V606.3M1986.45 606.3V609.3M1987.75 606.3V609.3M1989.05 602.3V606.3M1991.65 606.7V608.6M1992.95 605.3V608.5M1996.85 608.6V610.5M1998.15 603.7V608.6M1999.45 603.4V605.1M2002.05 607.9V610.9M2003.35 601.7V607.9M2004.65 601.7V607.4M2005.95 607.4V610.8M2008.55 601.9V605.4M2009.85 601.9V606.6M2011.15 606.6V611.1M2012.45 606.8V611.1M2013.75 602.5V606.8M2015.05 602.6V608.1M2016.35 608.1V609.5M2017.65 602.0V608.1M2018.95 601.5V604.5M2020.25 604.5V611.9M2021.55 606.1V611.9M2022.85 603.3V606.1M2024.15 603.3V606.3M2025.45 606.3V610.8M2026.75 603.9V610.6M2028.05 601.5V603.9M2029.35 602.0V607.9M2030.65 607.9V609.6M2031.95 603.7V609.1M2035.85 608.1V610.9M2037.15 600.1V608.1M2038.45 599.9V606.1M2039.75 606.1V610.8M2041.05 607.3V610.8M2042.35 600.0V607.3M2043.65 600.0V608.3M2044.95 608.3V612.9M2046.25 603.2V611.8M2047.55 601.8V603.4M2050.15 608.6V612.1M2051.45 603.6V608.6M2052.75 603.4V605.1M2054.05 605.1V611.1M2055.35 607.3V611.3M2056.65 600.9V607.3M2057.95 600.9V607.0M2059.25 607.0V609.5M2060.55 604.9V609.4M2063.15 601.6V607.9M2064.45 607.9V610.2M2067.05 600.8V603.5M2068.35 601.4V607.8M2069.65 607.8V609.5M2072.25 603.0V604.0M2073.55 603.9V608.8M2076.15 602.9V608.9M2077.45 602.2V604.5M2078.75 604.5V611.2M2080.05 608.5V611.6M2081.35 603.4V608.5M2082.65 603.4V606.6M2083.95 606.6V609.3M2085.25 606.1V609.3M2086.55 602.9V606.1M2089.15 606.1V611.3M2090.45 607.3V611.3M2091.75 601.5V607.3M2094.35 605.2V609.1M2095.65 606.1V609.1M2098.25 602.9V606.7M2100.85 605.1V611.0M2102.15 603.4V605.1M2103.45 603.9V609.5M2104.75 609.5V611.1M2106.05 604.0V610.0M2107.35 603.2V605.1M2108.65 605.1V610.9M2109.95 608.3V611.2M2112.55 604.0V606.8M2113.85 606.8V609.1M2115.15 603.8V608.9M2116.45 601.6V603.8M2117.75 603.3V608.8M2120.35 601.6V607.4M2124.25 606.1V610.1M2125.55 603.1V606.1M2126.85 603.4V608.1M2129.45 604.9V609.0M2132.05 605.1V610.6M2133.35 606.5V610.8M2134.65 602.6V606.5M2137.25 607.6V611.9M2139.85 601.8V603.6M2141.15 603.3V609.1M2142.45 607.8V609.7M2143.75 604.0V607.8M2145.05 604.0V606.5M2146.35 606.5V610.2M2148.95 602.1V606.9M2150.25 602.1V607.2M2151.55 607.2V610.0M2154.15 600.8V604.4M2155.45 601.3V607.9M2158.05 603.7V608.5M2159.35 602.6V603.8M2160.65 603.8V609.8M2161.95 609.4V611.0M2163.25 602.6V609.4M2164.55 601.7V603.9M2165.85 603.9V609.6M2167.15 607.4V609.9M2168.45 602.0V607.4M2169.75 601.9V605.8M2171.05 605.8V609.4M2172.35 605.9V609.4M2173.65 603.3V605.9M2174.95 603.4V607.2M2176.25 607.2V610.0M2177.55 604.3V609.6M2178.85 603.4V605.0M2180.15 605.0V609.4M2181.45 606.5V609.5M2182.75 602.0V606.5M2184.05 602.0V605.6M2185.35 605.6V611.8M2186.65 608.0V611.9M2189.25 603.9V606.2M2190.55 606.2V610.0M2191.85 607.2V610.1M2193.15 603.2V607.2M2194.45 603.2V606.4M2195.75 606.4V610.7M2197.05 604.9V610.6M2198.35 602.8V604.9M2200.95 607.1V608.8M2202.25 605.5V608.7M2203.55 603.2V605.5M2204.85 603.7V608.2M2206.15 608.0V609.0M2207.45 603.2V608.1" fill="none" stroke="#a51e1e" stroke-width="1.35"/>
<path d="M1296.15 467.0V726.4M1302.65 579.0V695.0M1310.45 516.2V706.8M1313.05 630.2V653.7M1320.85 591.7V638.1M1331.25 603.9V626.1M1333.85 581.8V646.8M1336.45 575.9V604.9M1341.65 607.3V668.5M1349.45 560.5V650.1M1354.65 565.7V651.5M1361.15 559.7V589.7M1362.45 580.3V656.0M1365.05 529.3V575.6M1367.65 551.5V702.2M1371.55 547.1V670.0M1372.85 546.0V633.2M1379.35 545.0V604.4M1389.75 492.5V608.5M1453.45 574.8V621.5M1466.45 608.9V647.2M1470.35 613.5V643.6M1478.15 576.0V631.7M1487.25 581.3V626.2M1505.45 595.3V618.4M1510.65 601.6V625.8M1532.75 592.4V610.6M1535.35 604.7V614.2M1543.15 589.1V606.0M1544.45 592.6V619.6M1549.65 600.7V623.1M1556.15 596.4V621.7M1558.75 582.5V611.4M1562.65 582.4V617.1M1563.95 617.1V633.5M1614.65 599.8V616.7M1625.05 596.7V613.8M1632.85 592.7V610.1M1640.65 595.0V601.8M1644.55 592.6V600.4M1652.35 593.9V614.0M1654.95 592.3V614.7M1656.25 592.3V613.9M1661.45 608.0V618.6M1664.05 589.2V612.4M1675.75 592.6V612.1M1704.35 600.2V616.9M1739.45 600.4V603.4M1744.65 599.0V604.8M1749.85 599.1V608.0M1755.05 599.6V606.2M1766.75 604.2V617.1M1770.65 593.8V607.4M1774.55 592.9V603.5M1775.85 593.3V609.7M1799.25 601.3V611.8M1823.95 603.6V613.9M1842.15 596.5V605.1M1865.55 602.3V608.7M1894.15 603.6V610.6M1895.45 602.9V604.1M1920.15 600.3V605.0M1926.65 600.4V609.0M1931.85 604.0V611.8M1938.35 600.6V611.9M1944.85 602.1V604.4M1947.45 608.6V610.1M1950.05 602.3V603.4M1964.35 602.1V609.5M1966.95 603.8V613.6M1983.85 601.9V607.6M1990.35 602.3V606.7M1994.25 603.9V605.3M1995.55 604.2V609.1M2000.75 605.1V610.5M2007.25 605.4V610.7M2033.25 602.3V604.2M2034.55 604.2V610.5M2048.85 603.4V611.2M2061.85 601.3V604.9M2065.75 603.5V609.7M2070.95 604.0V608.7M2074.85 608.8V610.1M2087.85 602.9V606.1M2093.05 601.4V605.2M2096.95 602.9V606.1M2099.55 606.7V611.1M2111.25 604.0V608.3M2119.05 607.4V609.1M2121.65 601.5V606.5M2122.95 606.5V610.1M2128.15 608.1V609.5M2130.75 604.1V605.1M2135.95 602.6V607.6M2138.55 603.6V611.4M2147.65 606.9V610.2M2152.85 604.4V609.8M2156.75 607.9V609.2M2187.95 603.9V608.0M2199.65 603.0V607.1M1283.6 441V706M1285.6 470V773M1289.2 497V760M1293.5 462V540M1300.2 495V755M1372.3 474V600M1383.5 600V728M1392.5 560V720" fill="none" stroke="#ff0808" stroke-width="1.2"/>
<path d="M1279.0 774.3V438.4H2209.0V774.3H1279.0" fill="none" stroke="#d8d8d8" stroke-width="2"/>
<text x="1279.0" y="432.3" font-size="17" font-weight="bold" fill="#ff80ff" text-anchor="start">Unit: ( x10e-2 ) V</text>
<text x="2209.0" y="431.7" font-size="17" font-weight="bold" fill="#ff80ff" text-anchor="end">No. 998</text>
<text x="1289.3" y="454" font-size="17" font-weight="bold" fill="#8c8cff" xml:space="preserve">CH:  1  T:  2:13:43:47:807 498700</text>
<text x="1274.5" y="452.4" font-size="17" font-weight="bold" fill="#ff80ff" text-anchor="end">3.91</text>
<text x="1274.5" y="527.5" font-size="17" font-weight="bold" fill="#ff80ff" text-anchor="end">1.95</text>
<text x="1274.5" y="611.5" font-size="17" font-weight="bold" fill="#ff80ff" text-anchor="end">0.00</text>
<text x="1274.5" y="695.5" font-size="17" font-weight="bold" fill="#ff80ff" text-anchor="end">-1.95</text>
<text x="1274.5" y="772.5" font-size="17" font-weight="bold" fill="#ff80ff" text-anchor="end">-3.91</text>
<text x="1279.0" y="789.8" font-size="17" font-weight="bold" fill="#ff80ff" text-anchor="middle">0.0</text>
<text x="1372.0" y="789.8" font-size="17" font-weight="bold" fill="#ff80ff" text-anchor="middle">1.000</text>
<text x="1465.0" y="789.8" font-size="17" font-weight="bold" fill="#ff80ff" text-anchor="middle">2.000</text>
<text x="1558.0" y="789.8" font-size="17" font-weight="bold" fill="#ff80ff" text-anchor="middle">3.000</text>
<text x="1651.0" y="789.8" font-size="17" font-weight="bold" fill="#ff80ff" text-anchor="middle">4.000</text>
<text x="1744.0" y="789.8" font-size="17" font-weight="bold" fill="#ff80ff" text-anchor="middle">5.000</text>
<text x="1837.0" y="789.8" font-size="17" font-weight="bold" fill="#ff80ff" text-anchor="middle">6.000</text>
<text x="1930.0" y="789.8" font-size="17" font-weight="bold" fill="#ff80ff" text-anchor="middle">7.000</text>
<text x="2023.0" y="789.8" font-size="17" font-weight="bold" fill="#ff80ff" text-anchor="middle">8.000</text>
<text x="2116.0" y="789.8" font-size="17" font-weight="bold" fill="#ff80ff" text-anchor="middle">9.000</text>
<text x="2209.0" y="789.8" font-size="17" font-weight="bold" fill="#ff80ff" text-anchor="end">10.000</text>
<text x="2209.0" y="807.5" font-size="17" font-weight="bold" fill="#ff80ff" text-anchor="end">ms</text>
</svg>
<svg class="a" style="left:172px;top:832px" width="1034" height="420" viewBox="172 832 1034 420">
<rect x="172.5" y="833" width="1031.5" height="416" fill="#fff"/>
<path d="M173.5 1249V833.8H1203.5" fill="none" stroke="#6e6e6e" stroke-width="2"/>
<path d="M174.5 1248.5H1203.5V834" fill="none" stroke="#e4e4e4" stroke-width="1"/>
<path d="M275 851.3V1160M267.5 851.3H275" stroke="#c23a3a" stroke-width="1.3" fill="none"/>
<path d="M274 1160H1187.6M296.1 1160V1152M593 1160V1152M890.2 1160V1152M1187.6 1160V1152" stroke="#111" stroke-width="1.4" fill="none"/>
<rect x="376.3" y="865.0" width="11.2" height="11.2" fill="#ff0000" stroke="#1a0000" stroke-width="1.1"/>
<rect x="392.8" y="860.7" width="11.2" height="11.2" fill="#ff0000" stroke="#1a0000" stroke-width="1.1"/>
<rect x="408.7" y="860.9" width="11.2" height="11.2" fill="#ff0000" stroke="#1a0000" stroke-width="1.1"/>
<rect x="417.5" y="864.0" width="11.2" height="11.2" fill="#ff0000" stroke="#1a0000" stroke-width="1.1"/>
<rect x="422.2" y="863.3" width="11.2" height="11.2" fill="#ff0000" stroke="#1a0000" stroke-width="1.1"/>
<rect x="430.2" y="856.3" width="11.2" height="11.2" fill="#ff0000" stroke="#1a0000" stroke-width="1.1"/>
<rect x="443.0" y="864.0" width="11.2" height="11.2" fill="#ff0000" stroke="#1a0000" stroke-width="1.1"/>
<rect x="451.9" y="856.3" width="11.2" height="11.2" fill="#ff0000" stroke="#1a0000" stroke-width="1.1"/>
<rect x="461.8" y="855.1" width="11.2" height="11.2" fill="#ff0000" stroke="#1a0000" stroke-width="1.1"/>
<rect x="507.6" y="871.5" width="11.2" height="11.2" fill="#ff0000" stroke="#1a0000" stroke-width="1.1"/>
<rect x="517.5" y="862.0" width="11.2" height="11.2" fill="#ff0000" stroke="#1a0000" stroke-width="1.1"/>
<rect x="521.2" y="862.7" width="11.2" height="11.2" fill="#ff0000" stroke="#1a0000" stroke-width="1.1"/>
<rect x="529.4" y="859.4" width="11.2" height="11.2" fill="#ff0000" stroke="#1a0000" stroke-width="1.1"/>
<rect x="541.0" y="858.4" width="11.2" height="11.2" fill="#ff0000" stroke="#1a0000" stroke-width="1.1"/>
<rect x="397.0" y="959.6" width="11.2" height="11.2" fill="#ff0000" stroke="#1a0000" stroke-width="1.1"/>
<rect x="400.1" y="964.9" width="11.2" height="11.2" fill="#ff0000" stroke="#1a0000" stroke-width="1.1"/>
<rect x="462.7" y="972.8" width="11.2" height="11.2" fill="#ff0000" stroke="#1a0000" stroke-width="1.1"/>
<rect x="393.9" y="979.1" width="11.2" height="11.2" fill="#ff0000" stroke="#1a0000" stroke-width="1.1"/>
<rect x="393.9" y="988.0" width="11.2" height="11.2" fill="#ff0000" stroke="#1a0000" stroke-width="1.1"/>
<rect x="376.3" y="996.3" width="11.2" height="11.2" fill="#ff0000" stroke="#1a0000" stroke-width="1.1"/>
<rect x="376.3" y="1007.5" width="11.2" height="11.2" fill="#ff0000" stroke="#1a0000" stroke-width="1.1"/>
<rect x="409.0" y="991.9" width="11.2" height="11.2" fill="#ff0000" stroke="#1a0000" stroke-width="1.1"/>
<rect x="418.5" y="993.9" width="11.2" height="11.2" fill="#ff0000" stroke="#1a0000" stroke-width="1.1"/>
<rect x="430.4" y="989.0" width="11.2" height="11.2" fill="#ff0000" stroke="#1a0000" stroke-width="1.1"/>
<rect x="451.9" y="989.0" width="11.2" height="11.2" fill="#ff0000" stroke="#1a0000" stroke-width="1.1"/>
<rect x="401.4" y="1001.8" width="11.2" height="11.2" fill="#ff0000" stroke="#1a0000" stroke-width="1.1"/>
<rect x="422.2" y="1003.1" width="11.2" height="11.2" fill="#ff0000" stroke="#1a0000" stroke-width="1.1"/>
<rect x="443.6" y="995.9" width="11.2" height="11.2" fill="#ff0000" stroke="#1a0000" stroke-width="1.1"/>
<rect x="451.9" y="1001.2" width="11.2" height="11.2" fill="#ff0000" stroke="#1a0000" stroke-width="1.1"/>
<rect x="393.9" y="1009.1" width="11.2" height="11.2" fill="#ff0000" stroke="#1a0000" stroke-width="1.1"/>
<rect x="409.0" y="1011.1" width="11.2" height="11.2" fill="#ff0000" stroke="#1a0000" stroke-width="1.1"/>
<rect x="418.5" y="1013.7" width="11.2" height="11.2" fill="#ff0000" stroke="#1a0000" stroke-width="1.1"/>
<rect x="431.1" y="1013.7" width="11.2" height="11.2" fill="#ff0000" stroke="#1a0000" stroke-width="1.1"/>
<rect x="443.6" y="1007.1" width="11.2" height="11.2" fill="#ff0000" stroke="#1a0000" stroke-width="1.1"/>
<rect x="397.2" y="1019.6" width="11.2" height="11.2" fill="#ff0000" stroke="#1a0000" stroke-width="1.1"/>
<rect x="400.1" y="1028.9" width="11.2" height="11.2" fill="#ff0000" stroke="#1a0000" stroke-width="1.1"/>
<rect x="443.6" y="1024.9" width="11.2" height="11.2" fill="#ff0000" stroke="#1a0000" stroke-width="1.1"/>
<rect x="451.9" y="1030.9" width="11.2" height="11.2" fill="#ff0000" stroke="#1a0000" stroke-width="1.1"/>
<rect x="462.7" y="1030.9" width="11.2" height="11.2" fill="#ff0000" stroke="#1a0000" stroke-width="1.1"/>
<rect x="517.5" y="986.7" width="11.2" height="11.2" fill="#ff0000" stroke="#1a0000" stroke-width="1.1"/>
<rect x="521.2" y="997.2" width="11.2" height="11.2" fill="#ff0000" stroke="#1a0000" stroke-width="1.1"/>
<rect x="529.8" y="997.2" width="11.2" height="11.2" fill="#ff0000" stroke="#1a0000" stroke-width="1.1"/>
<rect x="541.0" y="998.5" width="11.2" height="11.2" fill="#ff0000" stroke="#1a0000" stroke-width="1.1"/>
<rect x="508.9" y="1009.1" width="11.2" height="11.2" fill="#ff0000" stroke="#1a0000" stroke-width="1.1"/>
<rect x="530.7" y="1011.1" width="11.2" height="11.2" fill="#ff0000" stroke="#1a0000" stroke-width="1.1"/>
<rect x="517.5" y="1028.2" width="11.2" height="11.2" fill="#ff0000" stroke="#1a0000" stroke-width="1.1"/>
<rect x="529.8" y="1024.9" width="11.2" height="11.2" fill="#ff0000" stroke="#1a0000" stroke-width="1.1"/>
<rect x="541.9" y="1021.6" width="11.2" height="11.2" fill="#ff0000" stroke="#1a0000" stroke-width="1.1"/>
<rect x="586.2" y="862.0" width="11.2" height="11.2" fill="#ff0000" stroke="#1a0000" stroke-width="1.1"/>
<rect x="595.1" y="866.9" width="11.2" height="11.2" fill="#ff0000" stroke="#1a0000" stroke-width="1.1"/>
<rect x="617.5" y="859.4" width="11.2" height="11.2" fill="#ff0000" stroke="#1a0000" stroke-width="1.1"/>
<rect x="628.0" y="874.5" width="11.2" height="11.2" fill="#ff0000" stroke="#1a0000" stroke-width="1.1"/>
<rect x="672.4" y="863.7" width="11.2" height="11.2" fill="#ff0000" stroke="#1a0000" stroke-width="1.1"/>
<rect x="696.1" y="865.0" width="11.2" height="11.2" fill="#ff0000" stroke="#1a0000" stroke-width="1.1"/>
<rect x="699.0" y="865.9" width="11.2" height="11.2" fill="#ff0000" stroke="#1a0000" stroke-width="1.1"/>
<rect x="725.1" y="863.7" width="11.2" height="11.2" fill="#ff0000" stroke="#1a0000" stroke-width="1.1"/>
<rect x="741.2" y="870.3" width="11.2" height="11.2" fill="#ff0000" stroke="#1a0000" stroke-width="1.1"/>
<rect x="708.0" y="891.0" width="11.2" height="11.2" fill="#ff0000" stroke="#1a0000" stroke-width="1.1"/>
<rect x="679.0" y="909.1" width="11.2" height="11.2" fill="#ff0000" stroke="#1a0000" stroke-width="1.1"/>
<rect x="646.9" y="927.6" width="11.2" height="11.2" fill="#ff0000" stroke="#1a0000" stroke-width="1.1"/>
<rect x="646.9" y="940.2" width="11.2" height="11.2" fill="#ff0000" stroke="#1a0000" stroke-width="1.1"/>
<rect x="658.8" y="941.1" width="11.2" height="11.2" fill="#ff0000" stroke="#1a0000" stroke-width="1.1"/>
<rect x="708.9" y="939.2" width="11.2" height="11.2" fill="#ff0000" stroke="#1a0000" stroke-width="1.1"/>
<rect x="716.8" y="941.1" width="11.2" height="11.2" fill="#ff0000" stroke="#1a0000" stroke-width="1.1"/>
<rect x="737.9" y="942.5" width="11.2" height="11.2" fill="#ff0000" stroke="#1a0000" stroke-width="1.1"/>
<rect x="579.0" y="954.3" width="11.2" height="11.2" fill="#ff0000" stroke="#1a0000" stroke-width="1.1"/>
<rect x="657.5" y="958.7" width="11.2" height="11.2" fill="#ff0000" stroke="#1a0000" stroke-width="1.1"/>
<rect x="716.8" y="953.0" width="11.2" height="11.2" fill="#ff0000" stroke="#1a0000" stroke-width="1.1"/>
<rect x="716.8" y="973.7" width="11.2" height="11.2" fill="#ff0000" stroke="#1a0000" stroke-width="1.1"/>
<rect x="715.5" y="982.0" width="11.2" height="11.2" fill="#ff0000" stroke="#1a0000" stroke-width="1.1"/>
<rect x="658.8" y="981.1" width="11.2" height="11.2" fill="#ff0000" stroke="#1a0000" stroke-width="1.1"/>
<rect x="587.5" y="988.6" width="11.2" height="11.2" fill="#ff0000" stroke="#1a0000" stroke-width="1.1"/>
<rect x="596.8" y="993.9" width="11.2" height="11.2" fill="#ff0000" stroke="#1a0000" stroke-width="1.1"/>
<rect x="579.0" y="1006.7" width="11.2" height="11.2" fill="#ff0000" stroke="#1a0000" stroke-width="1.1"/>
<rect x="588.2" y="1005.8" width="11.2" height="11.2" fill="#ff0000" stroke="#1a0000" stroke-width="1.1"/>
<rect x="596.8" y="1008.0" width="11.2" height="11.2" fill="#ff0000" stroke="#1a0000" stroke-width="1.1"/>
<rect x="597.2" y="1018.3" width="11.2" height="11.2" fill="#ff0000" stroke="#1a0000" stroke-width="1.1"/>
<rect x="617.5" y="994.8" width="11.2" height="11.2" fill="#ff0000" stroke="#1a0000" stroke-width="1.1"/>
<rect x="618.5" y="1003.8" width="11.2" height="11.2" fill="#ff0000" stroke="#1a0000" stroke-width="1.1"/>
<rect x="629.1" y="988.6" width="11.2" height="11.2" fill="#ff0000" stroke="#1a0000" stroke-width="1.1"/>
<rect x="631.1" y="983.4" width="11.2" height="11.2" fill="#ff0000" stroke="#1a0000" stroke-width="1.1"/>
<rect x="629.8" y="1001.8" width="11.2" height="11.2" fill="#ff0000" stroke="#1a0000" stroke-width="1.1"/>
<rect x="629.8" y="1011.1" width="11.2" height="11.2" fill="#ff0000" stroke="#1a0000" stroke-width="1.1"/>
<rect x="646.9" y="1006.7" width="11.2" height="11.2" fill="#ff0000" stroke="#1a0000" stroke-width="1.1"/>
<rect x="660.1" y="999.2" width="11.2" height="11.2" fill="#ff0000" stroke="#1a0000" stroke-width="1.1"/>
<rect x="660.1" y="1012.4" width="11.2" height="11.2" fill="#ff0000" stroke="#1a0000" stroke-width="1.1"/>
<rect x="672.4" y="1009.1" width="11.2" height="11.2" fill="#ff0000" stroke="#1a0000" stroke-width="1.1"/>
<rect x="681.2" y="986.4" width="11.2" height="11.2" fill="#ff0000" stroke="#1a0000" stroke-width="1.1"/>
<rect x="681.2" y="994.6" width="11.2" height="11.2" fill="#ff0000" stroke="#1a0000" stroke-width="1.1"/>
<rect x="683.2" y="1002.5" width="11.2" height="11.2" fill="#ff0000" stroke="#1a0000" stroke-width="1.1"/>
<rect x="696.4" y="1002.5" width="11.2" height="11.2" fill="#ff0000" stroke="#1a0000" stroke-width="1.1"/>
<rect x="699.7" y="1009.1" width="11.2" height="11.2" fill="#ff0000" stroke="#1a0000" stroke-width="1.1"/>
<rect x="709.6" y="1009.1" width="11.2" height="11.2" fill="#ff0000" stroke="#1a0000" stroke-width="1.1"/>
<rect x="725.4" y="999.2" width="11.2" height="11.2" fill="#ff0000" stroke="#1a0000" stroke-width="1.1"/>
<rect x="737.9" y="995.9" width="11.2" height="11.2" fill="#ff0000" stroke="#1a0000" stroke-width="1.1"/>
<rect x="737.9" y="1004.5" width="11.2" height="11.2" fill="#ff0000" stroke="#1a0000" stroke-width="1.1"/>
<rect x="726.7" y="1015.7" width="11.2" height="11.2" fill="#ff0000" stroke="#1a0000" stroke-width="1.1"/>
<rect x="741.2" y="1017.0" width="11.2" height="11.2" fill="#ff0000" stroke="#1a0000" stroke-width="1.1"/>
<rect x="639.7" y="1021.6" width="11.2" height="11.2" fill="#ff0000" stroke="#1a0000" stroke-width="1.1"/>
<rect x="648.2" y="1023.6" width="11.2" height="11.2" fill="#ff0000" stroke="#1a0000" stroke-width="1.1"/>
<rect x="629.8" y="1028.9" width="11.2" height="11.2" fill="#ff0000" stroke="#1a0000" stroke-width="1.1"/>
<rect x="648.2" y="1031.5" width="11.2" height="11.2" fill="#ff0000" stroke="#1a0000" stroke-width="1.1"/>
<rect x="663.4" y="1022.9" width="11.2" height="11.2" fill="#ff0000" stroke="#1a0000" stroke-width="1.1"/>
<rect x="673.3" y="1025.6" width="11.2" height="11.2" fill="#ff0000" stroke="#1a0000" stroke-width="1.1"/>
<rect x="673.3" y="1031.5" width="11.2" height="11.2" fill="#ff0000" stroke="#1a0000" stroke-width="1.1"/>
<rect x="681.9" y="1018.3" width="11.2" height="11.2" fill="#ff0000" stroke="#1a0000" stroke-width="1.1"/>
<rect x="683.9" y="1021.0" width="11.2" height="11.2" fill="#ff0000" stroke="#1a0000" stroke-width="1.1"/>
<rect x="699.0" y="1018.3" width="11.2" height="11.2" fill="#ff0000" stroke="#1a0000" stroke-width="1.1"/>
<rect x="699.7" y="1022.9" width="11.2" height="11.2" fill="#ff0000" stroke="#1a0000" stroke-width="1.1"/>
<rect x="709.6" y="1021.0" width="11.2" height="11.2" fill="#ff0000" stroke="#1a0000" stroke-width="1.1"/>
<rect x="717.5" y="1017.0" width="11.2" height="11.2" fill="#ff0000" stroke="#1a0000" stroke-width="1.1"/>
<rect x="717.5" y="1031.5" width="11.2" height="11.2" fill="#ff0000" stroke="#1a0000" stroke-width="1.1"/>
<rect x="709.6" y="1030.2" width="11.2" height="11.2" fill="#ff0000" stroke="#1a0000" stroke-width="1.1"/>
<rect x="738.6" y="1030.2" width="11.2" height="11.2" fill="#ff0000" stroke="#1a0000" stroke-width="1.1"/>
<rect x="741.9" y="1028.9" width="11.2" height="11.2" fill="#ff0000" stroke="#1a0000" stroke-width="1.1"/>
<rect x="824.8" y="865.0" width="11.2" height="11.2" fill="#ff0000" stroke="#1a0000" stroke-width="1.1"/>
<rect x="828.1" y="867.9" width="11.2" height="11.2" fill="#ff0000" stroke="#1a0000" stroke-width="1.1"/>
<rect x="839.3" y="862.0" width="11.2" height="11.2" fill="#ff0000" stroke="#1a0000" stroke-width="1.1"/>
<rect x="846.5" y="861.1" width="11.2" height="11.2" fill="#ff0000" stroke="#1a0000" stroke-width="1.1"/>
<rect x="848.9" y="862.7" width="11.2" height="11.2" fill="#ff0000" stroke="#1a0000" stroke-width="1.1"/>
<rect x="876.9" y="859.4" width="11.2" height="11.2" fill="#ff0000" stroke="#1a0000" stroke-width="1.1"/>
<rect x="876.9" y="864.0" width="11.2" height="11.2" fill="#ff0000" stroke="#1a0000" stroke-width="1.1"/>
<rect x="911.2" y="860.7" width="11.2" height="11.2" fill="#ff0000" stroke="#1a0000" stroke-width="1.1"/>
<rect x="931.6" y="873.6" width="11.2" height="11.2" fill="#ff0000" stroke="#1a0000" stroke-width="1.1"/>
<rect x="941.3" y="865.0" width="11.2" height="11.2" fill="#ff0000" stroke="#1a0000" stroke-width="1.1"/>
<rect x="829.1" y="905.9" width="11.2" height="11.2" fill="#ff0000" stroke="#1a0000" stroke-width="1.1"/>
<rect x="866.1" y="904.9" width="11.2" height="11.2" fill="#ff0000" stroke="#1a0000" stroke-width="1.1"/>
<rect x="866.1" y="908.2" width="11.2" height="11.2" fill="#ff0000" stroke="#1a0000" stroke-width="1.1"/>
<rect x="829.1" y="925.3" width="11.2" height="11.2" fill="#ff0000" stroke="#1a0000" stroke-width="1.1"/>
<rect x="857.3" y="952.1" width="11.2" height="11.2" fill="#ff0000" stroke="#1a0000" stroke-width="1.1"/>
<rect x="858.4" y="956.3" width="11.2" height="11.2" fill="#ff0000" stroke="#1a0000" stroke-width="1.1"/>
<rect x="886.8" y="960.0" width="11.2" height="11.2" fill="#ff0000" stroke="#1a0000" stroke-width="1.1"/>
<rect x="879.2" y="969.5" width="11.2" height="11.2" fill="#ff0000" stroke="#1a0000" stroke-width="1.1"/>
<rect x="928.3" y="944.7" width="11.2" height="11.2" fill="#ff0000" stroke="#1a0000" stroke-width="1.1"/>
<rect x="925.0" y="956.1" width="11.2" height="11.2" fill="#ff0000" stroke="#1a0000" stroke-width="1.1"/>
<rect x="950.1" y="966.2" width="11.2" height="11.2" fill="#ff0000" stroke="#1a0000" stroke-width="1.1"/>
<rect x="942.6" y="972.8" width="11.2" height="11.2" fill="#ff0000" stroke="#1a0000" stroke-width="1.1"/>
<rect x="944.8" y="979.4" width="11.2" height="11.2" fill="#ff0000" stroke="#1a0000" stroke-width="1.1"/>
<rect x="829.4" y="991.9" width="11.2" height="11.2" fill="#ff0000" stroke="#1a0000" stroke-width="1.1"/>
<rect x="830.0" y="997.2" width="11.2" height="11.2" fill="#ff0000" stroke="#1a0000" stroke-width="1.1"/>
<rect x="824.8" y="1002.5" width="11.2" height="11.2" fill="#ff0000" stroke="#1a0000" stroke-width="1.1"/>
<rect x="829.4" y="1009.1" width="11.2" height="11.2" fill="#ff0000" stroke="#1a0000" stroke-width="1.1"/>
<rect x="830.0" y="1017.0" width="11.2" height="11.2" fill="#ff0000" stroke="#1a0000" stroke-width="1.1"/>
<rect x="824.8" y="1027.6" width="11.2" height="11.2" fill="#ff0000" stroke="#1a0000" stroke-width="1.1"/>
<rect x="845.9" y="995.2" width="11.2" height="11.2" fill="#ff0000" stroke="#1a0000" stroke-width="1.1"/>
<rect x="846.5" y="999.9" width="11.2" height="11.2" fill="#ff0000" stroke="#1a0000" stroke-width="1.1"/>
<rect x="839.9" y="1002.5" width="11.2" height="11.2" fill="#ff0000" stroke="#1a0000" stroke-width="1.1"/>
<rect x="840.6" y="1009.1" width="11.2" height="11.2" fill="#ff0000" stroke="#1a0000" stroke-width="1.1"/>
<rect x="840.6" y="1015.7" width="11.2" height="11.2" fill="#ff0000" stroke="#1a0000" stroke-width="1.1"/>
<rect x="841.3" y="1022.9" width="11.2" height="11.2" fill="#ff0000" stroke="#1a0000" stroke-width="1.1"/>
<rect x="842.6" y="1030.2" width="11.2" height="11.2" fill="#ff0000" stroke="#1a0000" stroke-width="1.1"/>
<rect x="851.1" y="1016.3" width="11.2" height="11.2" fill="#ff0000" stroke="#1a0000" stroke-width="1.1"/>
<rect x="851.1" y="1028.9" width="11.2" height="11.2" fill="#ff0000" stroke="#1a0000" stroke-width="1.1"/>
<rect x="865.0" y="986.7" width="11.2" height="11.2" fill="#ff0000" stroke="#1a0000" stroke-width="1.1"/>
<rect x="864.3" y="997.9" width="11.2" height="11.2" fill="#ff0000" stroke="#1a0000" stroke-width="1.1"/>
<rect x="865.7" y="999.9" width="11.2" height="11.2" fill="#ff0000" stroke="#1a0000" stroke-width="1.1"/>
<rect x="878.2" y="1001.8" width="11.2" height="11.2" fill="#ff0000" stroke="#1a0000" stroke-width="1.1"/>
<rect x="879.5" y="1015.7" width="11.2" height="11.2" fill="#ff0000" stroke="#1a0000" stroke-width="1.1"/>
<rect x="886.1" y="991.9" width="11.2" height="11.2" fill="#ff0000" stroke="#1a0000" stroke-width="1.1"/>
<rect x="889.4" y="996.6" width="11.2" height="11.2" fill="#ff0000" stroke="#1a0000" stroke-width="1.1"/>
<rect x="892.0" y="998.5" width="11.2" height="11.2" fill="#ff0000" stroke="#1a0000" stroke-width="1.1"/>
<rect x="901.9" y="996.6" width="11.2" height="11.2" fill="#ff0000" stroke="#1a0000" stroke-width="1.1"/>
<rect x="908.5" y="999.2" width="11.2" height="11.2" fill="#ff0000" stroke="#1a0000" stroke-width="1.1"/>
<rect x="911.2" y="993.9" width="11.2" height="11.2" fill="#ff0000" stroke="#1a0000" stroke-width="1.1"/>
<rect x="913.2" y="1007.8" width="11.2" height="11.2" fill="#ff0000" stroke="#1a0000" stroke-width="1.1"/>
<rect x="913.8" y="1017.0" width="11.2" height="11.2" fill="#ff0000" stroke="#1a0000" stroke-width="1.1"/>
<rect x="865.0" y="1018.3" width="11.2" height="11.2" fill="#ff0000" stroke="#1a0000" stroke-width="1.1"/>
<rect x="866.3" y="1023.6" width="11.2" height="11.2" fill="#ff0000" stroke="#1a0000" stroke-width="1.1"/>
<rect x="865.0" y="1030.2" width="11.2" height="11.2" fill="#ff0000" stroke="#1a0000" stroke-width="1.1"/>
<rect x="859.7" y="1022.3" width="11.2" height="11.2" fill="#ff0000" stroke="#1a0000" stroke-width="1.1"/>
<rect x="885.4" y="1019.0" width="11.2" height="11.2" fill="#ff0000" stroke="#1a0000" stroke-width="1.1"/>
<rect x="886.1" y="1030.2" width="11.2" height="11.2" fill="#ff0000" stroke="#1a0000" stroke-width="1.1"/>
<rect x="898.6" y="1017.0" width="11.2" height="11.2" fill="#ff0000" stroke="#1a0000" stroke-width="1.1"/>
<rect x="903.9" y="1017.0" width="11.2" height="11.2" fill="#ff0000" stroke="#1a0000" stroke-width="1.1"/>
<rect x="900.6" y="1028.2" width="11.2" height="11.2" fill="#ff0000" stroke="#1a0000" stroke-width="1.1"/>
<rect x="925.7" y="1024.9" width="11.2" height="11.2" fill="#ff0000" stroke="#1a0000" stroke-width="1.1"/>
<rect x="932.9" y="993.9" width="11.2" height="11.2" fill="#ff0000" stroke="#1a0000" stroke-width="1.1"/>
<rect x="932.9" y="1008.4" width="11.2" height="11.2" fill="#ff0000" stroke="#1a0000" stroke-width="1.1"/>
<rect x="932.9" y="1028.9" width="11.2" height="11.2" fill="#ff0000" stroke="#1a0000" stroke-width="1.1"/>
<rect x="942.8" y="1009.1" width="11.2" height="11.2" fill="#ff0000" stroke="#1a0000" stroke-width="1.1"/>
<rect x="945.5" y="1017.0" width="11.2" height="11.2" fill="#ff0000" stroke="#1a0000" stroke-width="1.1"/>
<rect x="948.1" y="1028.9" width="11.2" height="11.2" fill="#ff0000" stroke="#1a0000" stroke-width="1.1"/>
<rect x="950.8" y="1005.1" width="11.2" height="11.2" fill="#ff0000" stroke="#1a0000" stroke-width="1.1"/>
<rect x="954.7" y="1001.2" width="11.2" height="11.2" fill="#ff0000" stroke="#1a0000" stroke-width="1.1"/>
<rect x="962.0" y="991.3" width="11.2" height="11.2" fill="#ff0000" stroke="#1a0000" stroke-width="1.1"/>
<rect x="961.3" y="1011.7" width="11.2" height="11.2" fill="#ff0000" stroke="#1a0000" stroke-width="1.1"/>
<rect x="966.6" y="1022.3" width="11.2" height="11.2" fill="#ff0000" stroke="#1a0000" stroke-width="1.1"/>
<rect x="956.0" y="1015.7" width="11.2" height="11.2" fill="#ff0000" stroke="#1a0000" stroke-width="1.1"/>
<rect x="974.5" y="865.9" width="11.2" height="11.2" fill="#ff0000" stroke="#1a0000" stroke-width="1.1"/>
<rect x="982.4" y="865.0" width="11.2" height="11.2" fill="#ff0000" stroke="#1a0000" stroke-width="1.1"/>
<rect x="991.6" y="865.0" width="11.2" height="11.2" fill="#ff0000" stroke="#1a0000" stroke-width="1.1"/>
<rect x="1000.8" y="865.0" width="11.2" height="11.2" fill="#ff0000" stroke="#1a0000" stroke-width="1.1"/>
<rect x="1114.3" y="860.7" width="11.2" height="11.2" fill="#ff0000" stroke="#1a0000" stroke-width="1.1"/>
<rect x="1120.9" y="855.4" width="11.2" height="11.2" fill="#ff0000" stroke="#1a0000" stroke-width="1.1"/>
<rect x="1118.9" y="865.3" width="11.2" height="11.2" fill="#ff0000" stroke="#1a0000" stroke-width="1.1"/>
<rect x="1130.8" y="868.2" width="11.2" height="11.2" fill="#ff0000" stroke="#1a0000" stroke-width="1.1"/>
<rect x="1144.6" y="864.0" width="11.2" height="11.2" fill="#ff0000" stroke="#1a0000" stroke-width="1.1"/>
<rect x="1153.2" y="865.9" width="11.2" height="11.2" fill="#ff0000" stroke="#1a0000" stroke-width="1.1"/>
<rect x="1144.6" y="922.0" width="11.2" height="11.2" fill="#ff0000" stroke="#1a0000" stroke-width="1.1"/>
<rect x="1142.7" y="951.0" width="11.2" height="11.2" fill="#ff0000" stroke="#1a0000" stroke-width="1.1"/>
<rect x="1140.7" y="959.6" width="11.2" height="11.2" fill="#ff0000" stroke="#1a0000" stroke-width="1.1"/>
<rect x="1145.3" y="956.3" width="11.2" height="11.2" fill="#ff0000" stroke="#1a0000" stroke-width="1.1"/>
<rect x="1140.0" y="968.9" width="11.2" height="11.2" fill="#ff0000" stroke="#1a0000" stroke-width="1.1"/>
<rect x="1122.0" y="973.5" width="11.2" height="11.2" fill="#ff0000" stroke="#1a0000" stroke-width="1.1"/>
<rect x="971.8" y="980.1" width="11.2" height="11.2" fill="#ff0000" stroke="#1a0000" stroke-width="1.1"/>
<rect x="1004.8" y="980.1" width="11.2" height="11.2" fill="#ff0000" stroke="#1a0000" stroke-width="1.1"/>
<rect x="1002.8" y="988.6" width="11.2" height="11.2" fill="#ff0000" stroke="#1a0000" stroke-width="1.1"/>
<rect x="1000.8" y="993.9" width="11.2" height="11.2" fill="#ff0000" stroke="#1a0000" stroke-width="1.1"/>
<rect x="975.8" y="999.9" width="11.2" height="11.2" fill="#ff0000" stroke="#1a0000" stroke-width="1.1"/>
<rect x="982.4" y="1001.8" width="11.2" height="11.2" fill="#ff0000" stroke="#1a0000" stroke-width="1.1"/>
<rect x="992.3" y="998.5" width="11.2" height="11.2" fill="#ff0000" stroke="#1a0000" stroke-width="1.1"/>
<rect x="1001.5" y="1001.8" width="11.2" height="11.2" fill="#ff0000" stroke="#1a0000" stroke-width="1.1"/>
<rect x="970.5" y="1012.4" width="11.2" height="11.2" fill="#ff0000" stroke="#1a0000" stroke-width="1.1"/>
<rect x="976.4" y="1018.3" width="11.2" height="11.2" fill="#ff0000" stroke="#1a0000" stroke-width="1.1"/>
<rect x="983.0" y="1021.0" width="11.2" height="11.2" fill="#ff0000" stroke="#1a0000" stroke-width="1.1"/>
<rect x="992.3" y="1020.3" width="11.2" height="11.2" fill="#ff0000" stroke="#1a0000" stroke-width="1.1"/>
<rect x="1001.5" y="1017.7" width="11.2" height="11.2" fill="#ff0000" stroke="#1a0000" stroke-width="1.1"/>
<rect x="1011.4" y="1013.7" width="11.2" height="11.2" fill="#ff0000" stroke="#1a0000" stroke-width="1.1"/>
<rect x="1011.4" y="1017.0" width="11.2" height="11.2" fill="#ff0000" stroke="#1a0000" stroke-width="1.1"/>
<rect x="976.4" y="1028.9" width="11.2" height="11.2" fill="#ff0000" stroke="#1a0000" stroke-width="1.1"/>
<rect x="983.0" y="1029.5" width="11.2" height="11.2" fill="#ff0000" stroke="#1a0000" stroke-width="1.1"/>
<rect x="992.3" y="1026.2" width="11.2" height="11.2" fill="#ff0000" stroke="#1a0000" stroke-width="1.1"/>
<rect x="1002.8" y="1029.5" width="11.2" height="11.2" fill="#ff0000" stroke="#1a0000" stroke-width="1.1"/>
<rect x="1010.1" y="1028.9" width="11.2" height="11.2" fill="#ff0000" stroke="#1a0000" stroke-width="1.1"/>
<rect x="1035.1" y="1003.8" width="11.2" height="11.2" fill="#ff0000" stroke="#1a0000" stroke-width="1.1"/>
<rect x="1037.1" y="1008.4" width="11.2" height="11.2" fill="#ff0000" stroke="#1a0000" stroke-width="1.1"/>
<rect x="1043.7" y="988.6" width="11.2" height="11.2" fill="#ff0000" stroke="#1a0000" stroke-width="1.1"/>
<rect x="1053.0" y="993.9" width="11.2" height="11.2" fill="#ff0000" stroke="#1a0000" stroke-width="1.1"/>
<rect x="1033.2" y="1022.3" width="11.2" height="11.2" fill="#ff0000" stroke="#1a0000" stroke-width="1.1"/>
<rect x="1035.8" y="1025.6" width="11.2" height="11.2" fill="#ff0000" stroke="#1a0000" stroke-width="1.1"/>
<rect x="1037.8" y="1028.2" width="11.2" height="11.2" fill="#ff0000" stroke="#1a0000" stroke-width="1.1"/>
<rect x="1074.1" y="1022.9" width="11.2" height="11.2" fill="#ff0000" stroke="#1a0000" stroke-width="1.1"/>
<rect x="1078.7" y="1019.6" width="11.2" height="11.2" fill="#ff0000" stroke="#1a0000" stroke-width="1.1"/>
<rect x="1115.6" y="995.2" width="11.2" height="11.2" fill="#ff0000" stroke="#1a0000" stroke-width="1.1"/>
<rect x="1144.0" y="988.0" width="11.2" height="11.2" fill="#ff0000" stroke="#1a0000" stroke-width="1.1"/>
<rect x="1153.2" y="1000.5" width="11.2" height="11.2" fill="#ff0000" stroke="#1a0000" stroke-width="1.1"/>
<rect x="1118.9" y="1007.8" width="11.2" height="11.2" fill="#ff0000" stroke="#1a0000" stroke-width="1.1"/>
<rect x="1130.8" y="1010.4" width="11.2" height="11.2" fill="#ff0000" stroke="#1a0000" stroke-width="1.1"/>
<rect x="1142.0" y="1008.4" width="11.2" height="11.2" fill="#ff0000" stroke="#1a0000" stroke-width="1.1"/>
<rect x="1149.9" y="1012.4" width="11.2" height="11.2" fill="#ff0000" stroke="#1a0000" stroke-width="1.1"/>
<rect x="1122.2" y="1017.0" width="11.2" height="11.2" fill="#ff0000" stroke="#1a0000" stroke-width="1.1"/>
<rect x="1120.2" y="1026.9" width="11.2" height="11.2" fill="#ff0000" stroke="#1a0000" stroke-width="1.1"/>
<rect x="1131.4" y="1026.2" width="11.2" height="11.2" fill="#ff0000" stroke="#1a0000" stroke-width="1.1"/>
<rect x="1140.7" y="1021.6" width="11.2" height="11.2" fill="#ff0000" stroke="#1a0000" stroke-width="1.1"/>
<rect x="1149.9" y="1024.9" width="11.2" height="11.2" fill="#ff0000" stroke="#1a0000" stroke-width="1.1"/>
<rect x="1154.5" y="1026.9" width="11.2" height="11.2" fill="#ff0000" stroke="#1a0000" stroke-width="1.1"/>
<text x="265" y="857.5" font-size="17" fill="#d42626" text-anchor="end">100.5</text>
<text x="265" y="1011.5" font-size="17" fill="#d42626" text-anchor="end">50.2</text>
<text x="265" y="1165.5" font-size="17" fill="#d42626" text-anchor="end">0.0</text>
<text transform="translate(211 932.7) rotate(-90)" font-size="19.5" fill="#d42626" text-anchor="middle">Amplitude(dB)</text>
<text x="295.4" y="1180.3" font-size="16.8" fill="#111" text-anchor="middle">0.0</text>
<text x="592.5" y="1180.3" font-size="16.8" fill="#111" text-anchor="middle">19947.7</text>
<text x="889" y="1180.3" font-size="16.8" fill="#111" text-anchor="middle">39895.3</text>
<text x="1187.6" y="1180.3" font-size="16.8" fill="#111" text-anchor="end">59843.0</text>
<text x="689" y="1205.5" font-size="24.2" fill="#111" text-anchor="middle">X:Arrival time(ms)</text>
<text x="689.5" y="1226" font-size="17.3" fill="#111" text-anchor="middle">Channel: all channel</text>
</svg>
<svg class="a" style="left:1209px;top:831px" width="1024" height="421" viewBox="1209 831 1024 421">
<rect x="1211" y="834" width="1019" height="414" fill="#9a9a9a"/>
<defs><clipPath id="c3"><rect x="1212" y="835" width="1017" height="412"/></clipPath></defs>
<g clip-path="url(#c3)">
<polygon points="1706.6,995.7 1532.0,1094.6 1498.8,905.4 1706.6,832.5" fill="#a6a6a6"/>
<polygon points="1706.6,995.7 1903.2,1076.0 1933.7,891.3 1706.6,832.5" fill="#a3a3a3"/>
<polygon points="1706.6,995.7 1532.0,1094.6 1737.0,1223.4 1903.2,1076.0" fill="#c3c3c3"/>
<path d="M1706.6 995.7L1706.6 832.5M1706.6 995.7L1532.0 1094.6M1706.6 995.7L1706.6 832.5M1706.6 995.7L1903.2 1076.0M1677.9 1012.0L1672.4 844.5M1706.6 965.0L1525.8 1059.0M1740.0 1009.4L1745.2 842.5M1706.6 965.0L1908.9 1041.3M1646.5 1029.7L1635.1 857.6M1706.6 933.4L1519.3 1022.4M1776.1 1024.1L1786.8 853.3M1706.6 933.4L1914.8 1005.5M1612.1 1049.3L1594.1 872.0M1706.6 900.8L1512.7 984.6M1815.0 1040.0L1831.8 864.9M1706.6 900.8L1920.9 968.6M1574.1 1070.8L1548.9 887.8M1706.6 867.2L1505.9 945.6M1857.3 1057.2L1880.6 877.6M1706.6 867.2L1927.2 930.6M1532.0 1094.6L1498.8 905.4M1706.6 832.5L1498.8 905.4M1903.2 1076.0L1933.7 891.3M1706.6 832.5L1933.7 891.3" stroke="#828282" stroke-width="1" fill="none"/>
<path d="M1706.6 995.7L1903.2 1076.0M1706.6 995.7L1532.0 1094.6M1677.9 1012.0L1875.9 1100.2M1740.0 1009.4L1566.9 1116.5M1646.5 1029.7L1846.0 1126.7M1776.1 1024.1L1604.4 1140.1M1612.1 1049.3L1813.2 1155.8M1815.0 1040.0L1645.1 1165.6M1574.1 1070.8L1777.1 1187.9M1857.3 1057.2L1689.1 1193.3M1532.0 1094.6L1737.0 1223.4M1903.2 1076.0L1737.0 1223.4" stroke="#626262" stroke-width="1.1" fill="none"/>
<path d="M1706.6 995.7L1484.9 1120.9" stroke="#f06060" stroke-width="1.2"/>
<path d="M1706.6 995.7L1484.9 1120.9" stroke="#ff0000" stroke-width="2.4" stroke-dasharray="1.8 1.4"/>
<path d="M1706.6 995.7L1951.7 1097.3" stroke="#3ad23a" stroke-width="1.6"/>
<path d="M1706.6 995.7V834" stroke="#2828e0" stroke-width="1.4"/>
<path d="M1776.2 1043.9h2.8v2.8h-2.8zM1767.3 1040.7h2.8v2.8h-2.8zM1789.3 1049.7h2.8v2.8h-2.8zM1772.0 1046.3h2.8v2.8h-2.8zM1776.1 1050.1h2.8v2.8h-2.8zM1777.8 1046.5h2.8v2.8h-2.8zM1784.0 1047.2h2.8v2.8h-2.8zM1793.9 1052.5h2.8v2.8h-2.8zM1772.2 1046.3h2.8v2.8h-2.8zM1763.4 1042.6h2.8v2.8h-2.8zM1792.1 1051.6h2.8v2.8h-2.8zM1794.5 1054.1h2.8v2.8h-2.8zM1788.3 1051.1h2.8v2.8h-2.8zM1775.6 1044.3h2.8v2.8h-2.8zM1761.1 1037.8h2.8v2.8h-2.8zM1796.1 1054.8h2.8v2.8h-2.8zM1773.5 1048.7h2.8v2.8h-2.8zM1778.4 1051.3h2.8v2.8h-2.8zM1774.3 1043.3h2.8v2.8h-2.8zM1796.1 1051.7h2.8v2.8h-2.8zM1788.1 1052.1h2.8v2.8h-2.8zM1792.9 1056.9h2.8v2.8h-2.8zM1787.0 1047.0h2.8v2.8h-2.8zM1759.8 1039.6h2.8v2.8h-2.8zM1792.8 1049.7h2.8v2.8h-2.8zM1777.8 1043.6h2.8v2.8h-2.8zM1773.9 1041.4h2.8v2.8h-2.8zM1771.1 1044.6h2.8v2.8h-2.8zM1764.3 1044.0h2.8v2.8h-2.8zM1762.8 1038.6h2.8v2.8h-2.8zM1769.2 1042.8h2.8v2.8h-2.8zM1788.7 1050.3h2.8v2.8h-2.8zM1782.2 1052.4h2.8v2.8h-2.8zM1761.1 1043.4h2.8v2.8h-2.8zM1729.3 1077.7h2.8v2.8h-2.8zM1722.8 1072.8h2.8v2.8h-2.8zM1705.2 1075.8h2.8v2.8h-2.8zM1707.7 1075.2h2.8v2.8h-2.8zM1707.6 1076.0h2.8v2.8h-2.8zM1728.9 1078.5h2.8v2.8h-2.8zM1736.1 1076.5h2.8v2.8h-2.8zM1719.3 1085.0h2.8v2.8h-2.8zM1705.9 1073.6h2.8v2.8h-2.8zM1718.6 1079.5h2.8v2.8h-2.8zM1705.5 1077.4h2.8v2.8h-2.8zM1726.0 1081.3h2.8v2.8h-2.8zM1717.9 1075.6h2.8v2.8h-2.8zM1710.8 1071.5h2.8v2.8h-2.8zM1739.6 1076.5h2.8v2.8h-2.8zM1725.3 1071.2h2.8v2.8h-2.8zM1716.9 1073.6h2.8v2.8h-2.8zM1728.8 1075.6h2.8v2.8h-2.8zM1724.9 1083.2h2.8v2.8h-2.8zM1721.7 1068.7h2.8v2.8h-2.8zM1732.9 1073.9h2.8v2.8h-2.8zM1711.9 1075.9h2.8v2.8h-2.8zM1719.6 1066.4h2.8v2.8h-2.8zM1729.8 1082.8h2.8v2.8h-2.8zM1716.2 1078.7h2.8v2.8h-2.8zM1739.3 1075.5h2.8v2.8h-2.8zM1729.6 1072.2h2.8v2.8h-2.8zM1727.5 1066.5h2.8v2.8h-2.8zM1729.3 1069.3h2.8v2.8h-2.8zM1728.0 1075.0h2.8v2.8h-2.8zM1720.3 1080.8h2.8v2.8h-2.8zM1734.2 1081.0h2.8v2.8h-2.8zM1724.8 1072.5h2.8v2.8h-2.8zM1726.9 1082.5h2.8v2.8h-2.8zM1721.6 1079.8h2.8v2.8h-2.8zM1736.0 1079.5h2.8v2.8h-2.8zM1717.9 1081.8h2.8v2.8h-2.8zM1716.9 1081.7h2.8v2.8h-2.8zM1730.6 1076.9h2.8v2.8h-2.8zM1725.4 1067.0h2.8v2.8h-2.8zM1727.6 1068.7h2.8v2.8h-2.8zM1711.8 1071.4h2.8v2.8h-2.8zM1712.8 1068.1h2.8v2.8h-2.8zM1720.9 1080.4h2.8v2.8h-2.8zM1721.3 1067.6h2.8v2.8h-2.8zM1727.7 1071.0h2.8v2.8h-2.8zM1719.9 1082.8h2.8v2.8h-2.8zM1727.1 1071.9h2.8v2.8h-2.8zM1725.1 1076.8h2.8v2.8h-2.8zM1730.5 1077.5h2.8v2.8h-2.8zM1722.5 1067.8h2.8v2.8h-2.8zM1702.6 1076.2h2.8v2.8h-2.8zM1719.0 1079.1h2.8v2.8h-2.8zM1731.4 1068.3h2.8v2.8h-2.8zM1720.0 1078.0h2.8v2.8h-2.8zM1734.5 1070.9h2.8v2.8h-2.8zM1722.2 1081.8h2.8v2.8h-2.8zM1739.7 1073.2h2.8v2.8h-2.8zM1748.9 1055.5h2.8v2.8h-2.8zM1751.1 1054.1h2.8v2.8h-2.8zM1739.6 1064.3h2.8v2.8h-2.8zM1764.8 1072.5h2.8v2.8h-2.8zM1749.6 1080.5h2.8v2.8h-2.8zM1741.3 1058.0h2.8v2.8h-2.8zM1744.6 1068.3h2.8v2.8h-2.8zM1766.1 1062.2h2.8v2.8h-2.8zM1763.9 1080.0h2.8v2.8h-2.8zM1751.8 1078.6h2.8v2.8h-2.8zM1766.1 1065.2h2.8v2.8h-2.8zM1740.9 1052.4h2.8v2.8h-2.8zM1743.4 1064.7h2.8v2.8h-2.8zM1735.5 1060.6h2.8v2.8h-2.8zM1752.3 1060.7h2.8v2.8h-2.8zM1760.7 1068.2h2.8v2.8h-2.8zM1753.7 1070.3h2.8v2.8h-2.8zM1755.4 1063.2h2.8v2.8h-2.8zM1740.8 1068.8h2.8v2.8h-2.8zM1736.7 1051.2h2.8v2.8h-2.8zM1747.0 1057.4h2.8v2.8h-2.8zM1761.4 1055.1h2.8v2.8h-2.8zM1750.4 1072.3h2.8v2.8h-2.8zM1749.6 1075.8h2.8v2.8h-2.8zM1739.1 1055.5h2.8v2.8h-2.8zM1744.6 1061.7h2.8v2.8h-2.8zM1754.6 1056.3h2.8v2.8h-2.8zM1754.6 1072.5h2.8v2.8h-2.8zM1684.9 1111.9h2.8v2.8h-2.8zM1654.2 1128.8h2.8v2.8h-2.8zM1688.6 1109.6h2.8v2.8h-2.8zM1645.1 1118.3h2.8v2.8h-2.8zM1686.6 1106.0h2.8v2.8h-2.8zM1662.4 1128.7h2.8v2.8h-2.8zM1683.8 1107.0h2.8v2.8h-2.8zM1685.9 1105.5h2.8v2.8h-2.8zM1653.7 1111.5h2.8v2.8h-2.8zM1665.8 1119.5h2.8v2.8h-2.8zM1648.9 1118.3h2.8v2.8h-2.8zM1651.8 1125.3h2.8v2.8h-2.8zM1698.4 1100.3h2.8v2.8h-2.8zM1644.5 1126.9h2.8v2.8h-2.8zM1671.3 1100.8h2.8v2.8h-2.8zM1679.7 1099.1h2.8v2.8h-2.8zM1674.3 1118.5h2.8v2.8h-2.8zM1680.3 1094.3h2.8v2.8h-2.8zM1694.2 1107.3h2.8v2.8h-2.8zM1693.1 1105.2h2.8v2.8h-2.8zM1660.8 1114.1h2.8v2.8h-2.8zM1646.5 1126.0h2.8v2.8h-2.8zM1654.0 1114.3h2.8v2.8h-2.8zM1700.5 1103.2h2.8v2.8h-2.8zM1681.6 1099.4h2.8v2.8h-2.8zM1651.0 1123.9h2.8v2.8h-2.8zM1646.9 1124.6h2.8v2.8h-2.8zM1672.2 1106.4h2.8v2.8h-2.8zM1659.2 1115.5h2.8v2.8h-2.8zM1677.1 1095.1h2.8v2.8h-2.8zM1688.5 1103.7h2.8v2.8h-2.8zM1677.3 1113.6h2.8v2.8h-2.8zM1655.0 1133.5h2.8v2.8h-2.8zM1658.5 1118.1h2.8v2.8h-2.8zM1679.9 1117.7h2.8v2.8h-2.8zM1658.1 1121.8h2.8v2.8h-2.8zM1688.7 1092.2h2.8v2.8h-2.8zM1671.0 1102.9h2.8v2.8h-2.8zM1672.8 1109.4h2.8v2.8h-2.8zM1664.1 1103.7h2.8v2.8h-2.8zM1664.8 1127.9h2.8v2.8h-2.8zM1651.1 1120.3h2.8v2.8h-2.8zM1689.5 1092.9h2.8v2.8h-2.8zM1673.3 1108.9h2.8v2.8h-2.8zM1649.7 1130.9h2.8v2.8h-2.8zM1680.2 1118.5h2.8v2.8h-2.8zM1685.1 1090.8h2.8v2.8h-2.8zM1671.8 1107.4h2.8v2.8h-2.8zM1661.7 1130.5h2.8v2.8h-2.8zM1651.0 1126.0h2.8v2.8h-2.8zM1659.4 1122.3h2.8v2.8h-2.8zM1664.1 1127.1h2.8v2.8h-2.8zM1661.5 1110.4h2.8v2.8h-2.8zM1677.8 1097.5h2.8v2.8h-2.8zM1677.2 1101.1h2.8v2.8h-2.8zM1682.3 1097.8h2.8v2.8h-2.8zM1681.8 1109.9h2.8v2.8h-2.8zM1678.9 1117.5h2.8v2.8h-2.8zM1667.4 1107.4h2.8v2.8h-2.8zM1676.0 1114.3h2.8v2.8h-2.8zM1667.5 1115.4h2.8v2.8h-2.8zM1644.8 1123.1h2.8v2.8h-2.8zM1680.4 1101.4h2.8v2.8h-2.8zM1661.9 1126.9h2.8v2.8h-2.8zM1638.2 1121.6h2.8v2.8h-2.8zM1643.0 1122.6h2.8v2.8h-2.8zM1644.6 1124.5h2.8v2.8h-2.8zM1668.4 1126.1h2.8v2.8h-2.8zM1660.5 1121.7h2.8v2.8h-2.8zM1665.6 1122.4h2.8v2.8h-2.8zM1648.8 1123.1h2.8v2.8h-2.8zM1649.3 1121.6h2.8v2.8h-2.8zM1658.2 1119.7h2.8v2.8h-2.8zM1682.5 1091.2h2.8v2.8h-2.8zM1660.1 1122.9h2.8v2.8h-2.8zM1684.6 1099.8h2.8v2.8h-2.8zM1660.2 1114.6h2.8v2.8h-2.8zM1665.6 1117.2h2.8v2.8h-2.8zM1674.4 1096.6h2.8v2.8h-2.8zM1649.2 1119.3h2.8v2.8h-2.8zM1682.2 1112.2h2.8v2.8h-2.8zM1639.4 1119.7h2.8v2.8h-2.8zM1650.7 1124.3h2.8v2.8h-2.8zM1690.1 1112.8h2.8v2.8h-2.8zM1662.9 1115.7h2.8v2.8h-2.8zM1694.8 1103.8h2.8v2.8h-2.8zM1685.6 1095.8h2.8v2.8h-2.8zM1687.7 1109.8h2.8v2.8h-2.8zM1616.6 1138.0h2.8v2.8h-2.8zM1640.2 1144.1h2.8v2.8h-2.8zM1618.0 1139.3h2.8v2.8h-2.8zM1639.4 1141.2h2.8v2.8h-2.8zM1616.1 1136.5h2.8v2.8h-2.8zM1622.1 1140.9h2.8v2.8h-2.8zM1633.0 1143.2h2.8v2.8h-2.8zM1622.0 1136.0h2.8v2.8h-2.8zM1618.5 1135.0h2.8v2.8h-2.8zM1640.6 1140.9h2.8v2.8h-2.8zM1624.1 1135.3h2.8v2.8h-2.8zM1620.5 1133.9h2.8v2.8h-2.8zM1629.4 1139.2h2.8v2.8h-2.8zM1637.7 1144.2h2.8v2.8h-2.8zM1618.6 1134.9h2.8v2.8h-2.8zM1611.2 1132.1h2.8v2.8h-2.8zM1623.8 1138.1h2.8v2.8h-2.8zM1642.1 1145.5h2.8v2.8h-2.8zM1608.4 1133.8h2.8v2.8h-2.8zM1631.4 1137.5h2.8v2.8h-2.8zM1615.6 1133.4h2.8v2.8h-2.8zM1631.4 1139.4h2.8v2.8h-2.8zM1609.1 1132.4h2.8v2.8h-2.8zM1615.9 1135.0h2.8v2.8h-2.8zM1799.4 1092.9h2.8v2.8h-2.8zM1749.8 1155.8h2.8v2.8h-2.8zM1737.2 1149.0h2.8v2.8h-2.8zM1784.1 1139.0h2.8v2.8h-2.8zM1799.9 1140.0h2.8v2.8h-2.8zM1721.2 1149.2h2.8v2.8h-2.8zM1778.2 1118.3h2.8v2.8h-2.8zM1720.5 1110.3h2.8v2.8h-2.8zM1758.3 1109.0h2.8v2.8h-2.8zM1798.8 1102.8h2.8v2.8h-2.8zM1736.1 1100.4h2.8v2.8h-2.8zM1777.9 1148.3h2.8v2.8h-2.8zM1734.1 1118.6h2.8v2.8h-2.8zM1790.2 1132.6h2.8v2.8h-2.8zM1731.1 1159.8h2.8v2.8h-2.8zM1779.7 1112.9h2.8v2.8h-2.8zM1751.4 1126.0h2.8v2.8h-2.8zM1767.8 1123.2h2.8v2.8h-2.8zM1725.1 1114.4h2.8v2.8h-2.8zM1723.3 1126.2h2.8v2.8h-2.8zM1766.0 1132.9h2.8v2.8h-2.8zM1718.2 1129.8h2.8v2.8h-2.8zM1780.8 1131.0h2.8v2.8h-2.8zM1741.7 1145.4h2.8v2.8h-2.8zM1747.2 1146.0h2.8v2.8h-2.8zM1712.9 1098.0h2.8v2.8h-2.8zM1752.3 1097.7h2.8v2.8h-2.8zM1729.2 1155.5h2.8v2.8h-2.8zM1780.3 1112.3h2.8v2.8h-2.8zM1722.1 1141.7h2.8v2.8h-2.8zM1774.3 1103.8h2.8v2.8h-2.8zM1760.8 1135.6h2.8v2.8h-2.8zM1719.8 1099.6h2.8v2.8h-2.8zM1714.2 1149.0h2.8v2.8h-2.8zM1782.5 1091.4h2.8v2.8h-2.8zM1771.8 1100.2h2.8v2.8h-2.8zM1780.5 1097.2h2.8v2.8h-2.8zM1784.7 1091.7h2.8v2.8h-2.8zM1771.8 1091.1h2.8v2.8h-2.8zM1808.3 1108.4h2.8v2.8h-2.8zM1808.4 1105.8h2.8v2.8h-2.8zM1804.1 1099.6h2.8v2.8h-2.8zM1795.4 1102.1h2.8v2.8h-2.8zM1810.3 1098.9h2.8v2.8h-2.8zM1825.5 1065.5h2.8v2.8h-2.8zM1838.2 1060.8h2.8v2.8h-2.8zM1801.9 1062.5h2.8v2.8h-2.8zM1816.1 1051.1h2.8v2.8h-2.8zM1803.0 1060.8h2.8v2.8h-2.8zM1843.0 1061.4h2.8v2.8h-2.8zM1837.7 1052.2h2.8v2.8h-2.8zM1815.5 1070.9h2.8v2.8h-2.8zM1831.3 1065.4h2.8v2.8h-2.8zM1814.0 1064.0h2.8v2.8h-2.8zM1816.1 1052.8h2.8v2.8h-2.8zM1807.9 1052.2h2.8v2.8h-2.8zM1805.1 1057.4h2.8v2.8h-2.8zM1839.2 1061.1h2.8v2.8h-2.8zM1652.4 1166.7h2.8v2.8h-2.8zM1685.3 1156.7h2.8v2.8h-2.8zM1685.1 1175.5h2.8v2.8h-2.8zM1651.1 1151.6h2.8v2.8h-2.8zM1670.9 1173.9h2.8v2.8h-2.8zM1652.1 1158.1h2.8v2.8h-2.8zM1644.2 1153.2h2.8v2.8h-2.8zM1669.8 1157.5h2.8v2.8h-2.8zM1686.0 1160.6h2.8v2.8h-2.8zM1729.9 1180.7h2.8v2.8h-2.8zM1735.9 1175.3h2.8v2.8h-2.8zM1735.8 1180.6h2.8v2.8h-2.8zM1685.0 1187.0h2.8v2.8h-2.8zM1896.5 952.6h2.8v2.8h-2.8zM1879.8 1000.8h2.8v2.8h-2.8zM1874.7 1000.4h2.8v2.8h-2.8zM1871.1 1009.0h2.8v2.8h-2.8zM1895.7 947.8h2.8v2.8h-2.8zM1868.5 1013.8h2.8v2.8h-2.8zM1909.6 930.7h2.8v2.8h-2.8zM1841.7 1073.9h2.8v2.8h-2.8zM1904.7 919.3h2.8v2.8h-2.8zM1888.4 960.4h2.8v2.8h-2.8zM1887.3 925.7h2.8v2.8h-2.8zM1862.0 994.3h2.8v2.8h-2.8zM1871.6 993.2h2.8v2.8h-2.8zM1857.5 1084.2h2.8v2.8h-2.8zM1885.7 993.7h2.8v2.8h-2.8zM1889.0 929.1h2.8v2.8h-2.8zM1880.1 967.8h2.8v2.8h-2.8zM1854.7 1060.4h2.8v2.8h-2.8zM1855.0 1040.0h2.8v2.8h-2.8zM1887.1 950.4h2.8v2.8h-2.8zM1875.0 1012.3h2.8v2.8h-2.8zM1845.6 1074.4h2.8v2.8h-2.8zM1877.2 1002.2h2.8v2.8h-2.8zM1884.7 977.4h2.8v2.8h-2.8zM1884.7 950.2h2.8v2.8h-2.8zM1906.0 916.8h2.8v2.8h-2.8zM1862.3 1083.6h2.8v2.8h-2.8zM1885.4 986.5h2.8v2.8h-2.8zM1892.7 936.5h2.8v2.8h-2.8zM1875.4 1001.3h2.8v2.8h-2.8zM1854.2 1025.5h2.8v2.8h-2.8zM1869.1 1021.9h2.8v2.8h-2.8zM1868.4 1021.3h2.8v2.8h-2.8zM1879.0 973.2h2.8v2.8h-2.8zM1875.4 986.0h2.8v2.8h-2.8zM1865.7 1009.3h2.8v2.8h-2.8zM1898.5 928.8h2.8v2.8h-2.8zM1896.3 968.1h2.8v2.8h-2.8zM1871.9 999.5h2.8v2.8h-2.8zM1855.6 1069.1h2.8v2.8h-2.8zM1865.6 1034.5h2.8v2.8h-2.8zM1844.3 1047.5h2.8v2.8h-2.8z" fill="#ff1a1a"/>
<path d="M1777.0 1044.7h1.2v1.2h-1.2zM1768.1 1041.5h1.2v1.2h-1.2zM1790.1 1050.5h1.2v1.2h-1.2zM1772.8 1047.1h1.2v1.2h-1.2zM1776.9 1050.9h1.2v1.2h-1.2zM1778.6 1047.3h1.2v1.2h-1.2zM1784.8 1048.0h1.2v1.2h-1.2zM1794.7 1053.3h1.2v1.2h-1.2zM1773.0 1047.1h1.2v1.2h-1.2zM1764.2 1043.4h1.2v1.2h-1.2zM1792.9 1052.4h1.2v1.2h-1.2zM1795.3 1054.9h1.2v1.2h-1.2zM1789.1 1051.9h1.2v1.2h-1.2zM1776.4 1045.1h1.2v1.2h-1.2zM1761.9 1038.6h1.2v1.2h-1.2zM1796.9 1055.6h1.2v1.2h-1.2zM1774.3 1049.5h1.2v1.2h-1.2zM1779.2 1052.1h1.2v1.2h-1.2zM1775.1 1044.1h1.2v1.2h-1.2zM1796.9 1052.5h1.2v1.2h-1.2zM1788.9 1052.9h1.2v1.2h-1.2zM1793.7 1057.7h1.2v1.2h-1.2zM1787.8 1047.8h1.2v1.2h-1.2zM1760.6 1040.4h1.2v1.2h-1.2zM1793.6 1050.5h1.2v1.2h-1.2zM1778.6 1044.4h1.2v1.2h-1.2zM1774.7 1042.2h1.2v1.2h-1.2zM1771.9 1045.4h1.2v1.2h-1.2zM1765.1 1044.8h1.2v1.2h-1.2zM1763.6 1039.4h1.2v1.2h-1.2zM1770.0 1043.6h1.2v1.2h-1.2zM1789.5 1051.1h1.2v1.2h-1.2zM1783.0 1053.2h1.2v1.2h-1.2zM1761.9 1044.2h1.2v1.2h-1.2zM1730.1 1078.5h1.2v1.2h-1.2zM1723.6 1073.6h1.2v1.2h-1.2zM1706.0 1076.6h1.2v1.2h-1.2zM1708.5 1076.0h1.2v1.2h-1.2zM1708.4 1076.8h1.2v1.2h-1.2zM1729.7 1079.3h1.2v1.2h-1.2zM1736.9 1077.3h1.2v1.2h-1.2zM1720.1 1085.8h1.2v1.2h-1.2zM1706.7 1074.4h1.2v1.2h-1.2zM1719.4 1080.3h1.2v1.2h-1.2zM1706.3 1078.2h1.2v1.2h-1.2zM1726.8 1082.1h1.2v1.2h-1.2zM1718.7 1076.4h1.2v1.2h-1.2zM1711.6 1072.3h1.2v1.2h-1.2zM1740.4 1077.3h1.2v1.2h-1.2zM1726.1 1072.0h1.2v1.2h-1.2zM1717.7 1074.4h1.2v1.2h-1.2zM1729.6 1076.4h1.2v1.2h-1.2zM1725.7 1084.0h1.2v1.2h-1.2zM1722.5 1069.5h1.2v1.2h-1.2zM1733.7 1074.7h1.2v1.2h-1.2zM1712.7 1076.7h1.2v1.2h-1.2zM1720.4 1067.2h1.2v1.2h-1.2zM1730.6 1083.6h1.2v1.2h-1.2zM1717.0 1079.5h1.2v1.2h-1.2zM1740.1 1076.3h1.2v1.2h-1.2zM1730.4 1073.0h1.2v1.2h-1.2zM1728.3 1067.3h1.2v1.2h-1.2zM1730.1 1070.1h1.2v1.2h-1.2zM1728.8 1075.8h1.2v1.2h-1.2zM1721.1 1081.6h1.2v1.2h-1.2zM1735.0 1081.8h1.2v1.2h-1.2zM1725.6 1073.3h1.2v1.2h-1.2zM1727.7 1083.3h1.2v1.2h-1.2zM1722.4 1080.6h1.2v1.2h-1.2zM1736.8 1080.3h1.2v1.2h-1.2zM1718.7 1082.6h1.2v1.2h-1.2zM1717.7 1082.5h1.2v1.2h-1.2zM1731.4 1077.7h1.2v1.2h-1.2zM1726.2 1067.8h1.2v1.2h-1.2zM1728.4 1069.5h1.2v1.2h-1.2zM1712.6 1072.2h1.2v1.2h-1.2zM1713.6 1068.9h1.2v1.2h-1.2zM1721.7 1081.2h1.2v1.2h-1.2zM1722.1 1068.4h1.2v1.2h-1.2zM1728.5 1071.8h1.2v1.2h-1.2zM1720.7 1083.6h1.2v1.2h-1.2zM1727.9 1072.7h1.2v1.2h-1.2zM1725.9 1077.6h1.2v1.2h-1.2zM1731.3 1078.3h1.2v1.2h-1.2zM1723.3 1068.6h1.2v1.2h-1.2zM1703.4 1077.0h1.2v1.2h-1.2zM1719.8 1079.9h1.2v1.2h-1.2zM1732.2 1069.1h1.2v1.2h-1.2zM1720.8 1078.8h1.2v1.2h-1.2zM1735.3 1071.7h1.2v1.2h-1.2zM1723.0 1082.6h1.2v1.2h-1.2zM1740.5 1074.0h1.2v1.2h-1.2zM1749.7 1056.3h1.2v1.2h-1.2zM1751.9 1054.9h1.2v1.2h-1.2zM1740.4 1065.1h1.2v1.2h-1.2zM1765.6 1073.3h1.2v1.2h-1.2zM1750.4 1081.3h1.2v1.2h-1.2zM1742.1 1058.8h1.2v1.2h-1.2zM1745.4 1069.1h1.2v1.2h-1.2zM1766.9 1063.0h1.2v1.2h-1.2zM1764.7 1080.8h1.2v1.2h-1.2zM1752.6 1079.4h1.2v1.2h-1.2zM1766.9 1066.0h1.2v1.2h-1.2zM1741.7 1053.2h1.2v1.2h-1.2zM1744.2 1065.5h1.2v1.2h-1.2zM1736.3 1061.4h1.2v1.2h-1.2zM1753.1 1061.5h1.2v1.2h-1.2zM1761.5 1069.0h1.2v1.2h-1.2zM1754.5 1071.1h1.2v1.2h-1.2zM1756.2 1064.0h1.2v1.2h-1.2zM1741.6 1069.6h1.2v1.2h-1.2zM1737.5 1052.0h1.2v1.2h-1.2zM1747.8 1058.2h1.2v1.2h-1.2zM1762.2 1055.9h1.2v1.2h-1.2zM1751.2 1073.1h1.2v1.2h-1.2zM1750.4 1076.6h1.2v1.2h-1.2zM1739.9 1056.3h1.2v1.2h-1.2zM1745.4 1062.5h1.2v1.2h-1.2zM1755.4 1057.1h1.2v1.2h-1.2zM1755.4 1073.3h1.2v1.2h-1.2zM1685.7 1112.7h1.2v1.2h-1.2zM1655.0 1129.6h1.2v1.2h-1.2zM1689.4 1110.4h1.2v1.2h-1.2zM1645.9 1119.1h1.2v1.2h-1.2zM1687.4 1106.8h1.2v1.2h-1.2zM1663.2 1129.5h1.2v1.2h-1.2zM1684.6 1107.8h1.2v1.2h-1.2zM1686.7 1106.3h1.2v1.2h-1.2zM1654.5 1112.3h1.2v1.2h-1.2zM1666.6 1120.3h1.2v1.2h-1.2zM1649.7 1119.1h1.2v1.2h-1.2zM1652.6 1126.1h1.2v1.2h-1.2zM1699.2 1101.1h1.2v1.2h-1.2zM1645.3 1127.7h1.2v1.2h-1.2zM1672.1 1101.6h1.2v1.2h-1.2zM1680.5 1099.9h1.2v1.2h-1.2zM1675.1 1119.3h1.2v1.2h-1.2zM1681.1 1095.1h1.2v1.2h-1.2zM1695.0 1108.1h1.2v1.2h-1.2zM1693.9 1106.0h1.2v1.2h-1.2zM1661.6 1114.9h1.2v1.2h-1.2zM1647.3 1126.8h1.2v1.2h-1.2zM1654.8 1115.1h1.2v1.2h-1.2zM1701.3 1104.0h1.2v1.2h-1.2zM1682.4 1100.2h1.2v1.2h-1.2zM1651.8 1124.7h1.2v1.2h-1.2zM1647.7 1125.4h1.2v1.2h-1.2zM1673.0 1107.2h1.2v1.2h-1.2zM1660.0 1116.3h1.2v1.2h-1.2zM1677.9 1095.9h1.2v1.2h-1.2zM1689.3 1104.5h1.2v1.2h-1.2zM1678.1 1114.4h1.2v1.2h-1.2zM1655.8 1134.3h1.2v1.2h-1.2zM1659.3 1118.9h1.2v1.2h-1.2zM1680.7 1118.5h1.2v1.2h-1.2zM1658.9 1122.6h1.2v1.2h-1.2zM1689.5 1093.0h1.2v1.2h-1.2zM1671.8 1103.7h1.2v1.2h-1.2zM1673.6 1110.2h1.2v1.2h-1.2zM1664.9 1104.5h1.2v1.2h-1.2zM1665.6 1128.7h1.2v1.2h-1.2zM1651.9 1121.1h1.2v1.2h-1.2zM1690.3 1093.7h1.2v1.2h-1.2zM1674.1 1109.7h1.2v1.2h-1.2zM1650.5 1131.7h1.2v1.2h-1.2zM1681.0 1119.3h1.2v1.2h-1.2zM1685.9 1091.6h1.2v1.2h-1.2zM1672.6 1108.2h1.2v1.2h-1.2zM1662.5 1131.3h1.2v1.2h-1.2zM1651.8 1126.8h1.2v1.2h-1.2zM1660.2 1123.1h1.2v1.2h-1.2zM1664.9 1127.9h1.2v1.2h-1.2zM1662.3 1111.2h1.2v1.2h-1.2zM1678.6 1098.3h1.2v1.2h-1.2zM1678.0 1101.9h1.2v1.2h-1.2zM1683.1 1098.6h1.2v1.2h-1.2zM1682.6 1110.7h1.2v1.2h-1.2zM1679.7 1118.3h1.2v1.2h-1.2zM1668.2 1108.2h1.2v1.2h-1.2zM1676.8 1115.1h1.2v1.2h-1.2zM1668.3 1116.2h1.2v1.2h-1.2zM1645.6 1123.9h1.2v1.2h-1.2zM1681.2 1102.2h1.2v1.2h-1.2zM1662.7 1127.7h1.2v1.2h-1.2zM1639.0 1122.4h1.2v1.2h-1.2zM1643.8 1123.4h1.2v1.2h-1.2zM1645.4 1125.3h1.2v1.2h-1.2zM1669.2 1126.9h1.2v1.2h-1.2zM1661.3 1122.5h1.2v1.2h-1.2zM1666.4 1123.2h1.2v1.2h-1.2zM1649.6 1123.9h1.2v1.2h-1.2zM1650.1 1122.4h1.2v1.2h-1.2zM1659.0 1120.5h1.2v1.2h-1.2zM1683.3 1092.0h1.2v1.2h-1.2zM1660.9 1123.7h1.2v1.2h-1.2zM1685.4 1100.6h1.2v1.2h-1.2zM1661.0 1115.4h1.2v1.2h-1.2zM1666.4 1118.0h1.2v1.2h-1.2zM1675.2 1097.4h1.2v1.2h-1.2zM1650.0 1120.1h1.2v1.2h-1.2zM1683.0 1113.0h1.2v1.2h-1.2zM1640.2 1120.5h1.2v1.2h-1.2zM1651.5 1125.1h1.2v1.2h-1.2zM1690.9 1113.6h1.2v1.2h-1.2zM1663.7 1116.5h1.2v1.2h-1.2zM1695.6 1104.6h1.2v1.2h-1.2zM1686.4 1096.6h1.2v1.2h-1.2zM1688.5 1110.6h1.2v1.2h-1.2zM1617.4 1138.8h1.2v1.2h-1.2zM1641.0 1144.9h1.2v1.2h-1.2zM1618.8 1140.1h1.2v1.2h-1.2zM1640.2 1142.0h1.2v1.2h-1.2zM1616.9 1137.3h1.2v1.2h-1.2zM1622.9 1141.7h1.2v1.2h-1.2zM1633.8 1144.0h1.2v1.2h-1.2zM1622.8 1136.8h1.2v1.2h-1.2zM1619.3 1135.8h1.2v1.2h-1.2zM1641.4 1141.7h1.2v1.2h-1.2zM1624.9 1136.1h1.2v1.2h-1.2zM1621.3 1134.7h1.2v1.2h-1.2zM1630.2 1140.0h1.2v1.2h-1.2zM1638.5 1145.0h1.2v1.2h-1.2zM1619.4 1135.7h1.2v1.2h-1.2zM1612.0 1132.9h1.2v1.2h-1.2zM1624.6 1138.9h1.2v1.2h-1.2zM1642.9 1146.3h1.2v1.2h-1.2zM1609.2 1134.6h1.2v1.2h-1.2zM1632.2 1138.3h1.2v1.2h-1.2zM1616.4 1134.2h1.2v1.2h-1.2zM1632.2 1140.2h1.2v1.2h-1.2zM1609.9 1133.2h1.2v1.2h-1.2zM1616.7 1135.8h1.2v1.2h-1.2zM1800.2 1093.7h1.2v1.2h-1.2zM1750.6 1156.6h1.2v1.2h-1.2zM1738.0 1149.8h1.2v1.2h-1.2zM1784.9 1139.8h1.2v1.2h-1.2zM1800.7 1140.8h1.2v1.2h-1.2zM1722.0 1150.0h1.2v1.2h-1.2zM1779.0 1119.1h1.2v1.2h-1.2zM1721.3 1111.1h1.2v1.2h-1.2zM1759.1 1109.8h1.2v1.2h-1.2zM1799.6 1103.6h1.2v1.2h-1.2zM1736.9 1101.2h1.2v1.2h-1.2zM1778.7 1149.1h1.2v1.2h-1.2zM1734.9 1119.4h1.2v1.2h-1.2zM1791.0 1133.4h1.2v1.2h-1.2zM1731.9 1160.6h1.2v1.2h-1.2zM1780.5 1113.7h1.2v1.2h-1.2zM1752.2 1126.8h1.2v1.2h-1.2zM1768.6 1124.0h1.2v1.2h-1.2zM1725.9 1115.2h1.2v1.2h-1.2zM1724.1 1127.0h1.2v1.2h-1.2zM1766.8 1133.7h1.2v1.2h-1.2zM1719.0 1130.6h1.2v1.2h-1.2zM1781.6 1131.8h1.2v1.2h-1.2zM1742.5 1146.2h1.2v1.2h-1.2zM1748.0 1146.8h1.2v1.2h-1.2zM1713.7 1098.8h1.2v1.2h-1.2zM1753.1 1098.5h1.2v1.2h-1.2zM1730.0 1156.3h1.2v1.2h-1.2zM1781.1 1113.1h1.2v1.2h-1.2zM1722.9 1142.5h1.2v1.2h-1.2zM1775.1 1104.6h1.2v1.2h-1.2zM1761.6 1136.4h1.2v1.2h-1.2zM1720.6 1100.4h1.2v1.2h-1.2zM1715.0 1149.8h1.2v1.2h-1.2zM1783.3 1092.2h1.2v1.2h-1.2zM1772.6 1101.0h1.2v1.2h-1.2zM1781.3 1098.0h1.2v1.2h-1.2zM1785.5 1092.5h1.2v1.2h-1.2zM1772.6 1091.9h1.2v1.2h-1.2zM1809.1 1109.2h1.2v1.2h-1.2zM1809.2 1106.6h1.2v1.2h-1.2zM1804.9 1100.4h1.2v1.2h-1.2zM1796.2 1102.9h1.2v1.2h-1.2zM1811.1 1099.7h1.2v1.2h-1.2zM1826.3 1066.3h1.2v1.2h-1.2zM1839.0 1061.6h1.2v1.2h-1.2zM1802.7 1063.3h1.2v1.2h-1.2zM1816.9 1051.9h1.2v1.2h-1.2zM1803.8 1061.6h1.2v1.2h-1.2zM1843.8 1062.2h1.2v1.2h-1.2zM1838.5 1053.0h1.2v1.2h-1.2zM1816.3 1071.7h1.2v1.2h-1.2zM1832.1 1066.2h1.2v1.2h-1.2zM1814.8 1064.8h1.2v1.2h-1.2zM1816.9 1053.6h1.2v1.2h-1.2zM1808.7 1053.0h1.2v1.2h-1.2zM1805.9 1058.2h1.2v1.2h-1.2zM1840.0 1061.9h1.2v1.2h-1.2zM1653.2 1167.5h1.2v1.2h-1.2zM1686.1 1157.5h1.2v1.2h-1.2zM1685.9 1176.3h1.2v1.2h-1.2zM1651.9 1152.4h1.2v1.2h-1.2zM1671.7 1174.7h1.2v1.2h-1.2zM1652.9 1158.9h1.2v1.2h-1.2zM1645.0 1154.0h1.2v1.2h-1.2zM1670.6 1158.3h1.2v1.2h-1.2zM1686.8 1161.4h1.2v1.2h-1.2zM1730.7 1181.5h1.2v1.2h-1.2zM1736.7 1176.1h1.2v1.2h-1.2zM1736.6 1181.4h1.2v1.2h-1.2zM1685.8 1187.8h1.2v1.2h-1.2zM1897.3 953.4h1.2v1.2h-1.2zM1880.6 1001.6h1.2v1.2h-1.2zM1875.5 1001.2h1.2v1.2h-1.2zM1871.9 1009.8h1.2v1.2h-1.2zM1896.5 948.6h1.2v1.2h-1.2zM1869.3 1014.6h1.2v1.2h-1.2zM1910.4 931.5h1.2v1.2h-1.2zM1842.5 1074.7h1.2v1.2h-1.2zM1905.5 920.1h1.2v1.2h-1.2zM1889.2 961.2h1.2v1.2h-1.2zM1888.1 926.5h1.2v1.2h-1.2zM1862.8 995.1h1.2v1.2h-1.2zM1872.4 994.0h1.2v1.2h-1.2zM1858.3 1085.0h1.2v1.2h-1.2zM1886.5 994.5h1.2v1.2h-1.2zM1889.8 929.9h1.2v1.2h-1.2zM1880.9 968.6h1.2v1.2h-1.2zM1855.5 1061.2h1.2v1.2h-1.2zM1855.8 1040.8h1.2v1.2h-1.2zM1887.9 951.2h1.2v1.2h-1.2zM1875.8 1013.1h1.2v1.2h-1.2zM1846.4 1075.2h1.2v1.2h-1.2zM1878.0 1003.0h1.2v1.2h-1.2zM1885.5 978.2h1.2v1.2h-1.2zM1885.5 951.0h1.2v1.2h-1.2zM1906.8 917.6h1.2v1.2h-1.2zM1863.1 1084.4h1.2v1.2h-1.2zM1886.2 987.3h1.2v1.2h-1.2zM1893.5 937.3h1.2v1.2h-1.2zM1876.2 1002.1h1.2v1.2h-1.2zM1855.0 1026.3h1.2v1.2h-1.2zM1869.9 1022.7h1.2v1.2h-1.2zM1869.2 1022.1h1.2v1.2h-1.2zM1879.8 974.0h1.2v1.2h-1.2zM1876.2 986.8h1.2v1.2h-1.2zM1866.5 1010.1h1.2v1.2h-1.2zM1899.3 929.6h1.2v1.2h-1.2zM1897.1 968.9h1.2v1.2h-1.2zM1872.7 1000.3h1.2v1.2h-1.2zM1856.4 1069.9h1.2v1.2h-1.2zM1866.4 1035.3h1.2v1.2h-1.2zM1845.1 1048.3h1.2v1.2h-1.2z" fill="#5a1010"/>
</g>
<text x="1250.5" y="872" font-size="19" fill="#4a4a4a">3D Correlation Graph</text>
<text x="1250.5" y="893.5" font-size="19" fill="#4a4a4a">all channel</text>
<text x="1935.4" y="893" font-size="17" fill="#3c3c3c">146667</text>
<text x="1929" y="934.5" font-size="17" fill="#3c3c3c">117333</text>
<text x="1922" y="973.5" font-size="17" fill="#3c3c3c">88000</text>
<text x="1916.5" y="1010.5" font-size="17" fill="#3c3c3c">58667</text>
<text x="1911" y="1045.5" font-size="17" fill="#3c3c3c">29333</text>
<text x="1952.4" y="1099" font-size="18.6" fill="#3c3c3c">Y: Amplitude</text>
<text x="1484.9" y="1121" font-size="18.6" fill="#3c3c3c">X: Arrival<tspan fill="#969696"> time</tspan></text>
<text x="1881" y="1104" font-size="17" fill="#3c3c3c">23</text>
<text x="1851" y="1131" font-size="17" fill="#3c3c3c">46</text>
<text x="1820" y="1159" font-size="17" fill="#3c3c3c">70</text>
<text x="1784" y="1192" font-size="17" fill="#3c3c3c">93</text>
<text x="1746.5" y="1227.5" font-size="17" fill="#3c3c3c">116</text>
<text x="1551" y="1126" font-size="17" fill="#3c3c3c">20</text>
<text x="1590.5" y="1150" font-size="17" fill="#3c3c3c">39</text>
<text x="1631.5" y="1175" font-size="17" fill="#3c3c3c">59</text>
<text x="1676" y="1204.5" font-size="17" fill="#3c3c3c">78</text>
<text x="1725" y="1235" font-size="17" fill="#3c3c3c">98</text>
<rect x="1211" y="833.5" width="1019" height="414.5" fill="none" stroke="#b01a1a" stroke-width="2.6"/>
<rect x="1212.8" y="835.3" width="1015.4" height="410.9" fill="none" stroke="#e46a6a" stroke-width="0.9"/>
</svg>
</body></html>
